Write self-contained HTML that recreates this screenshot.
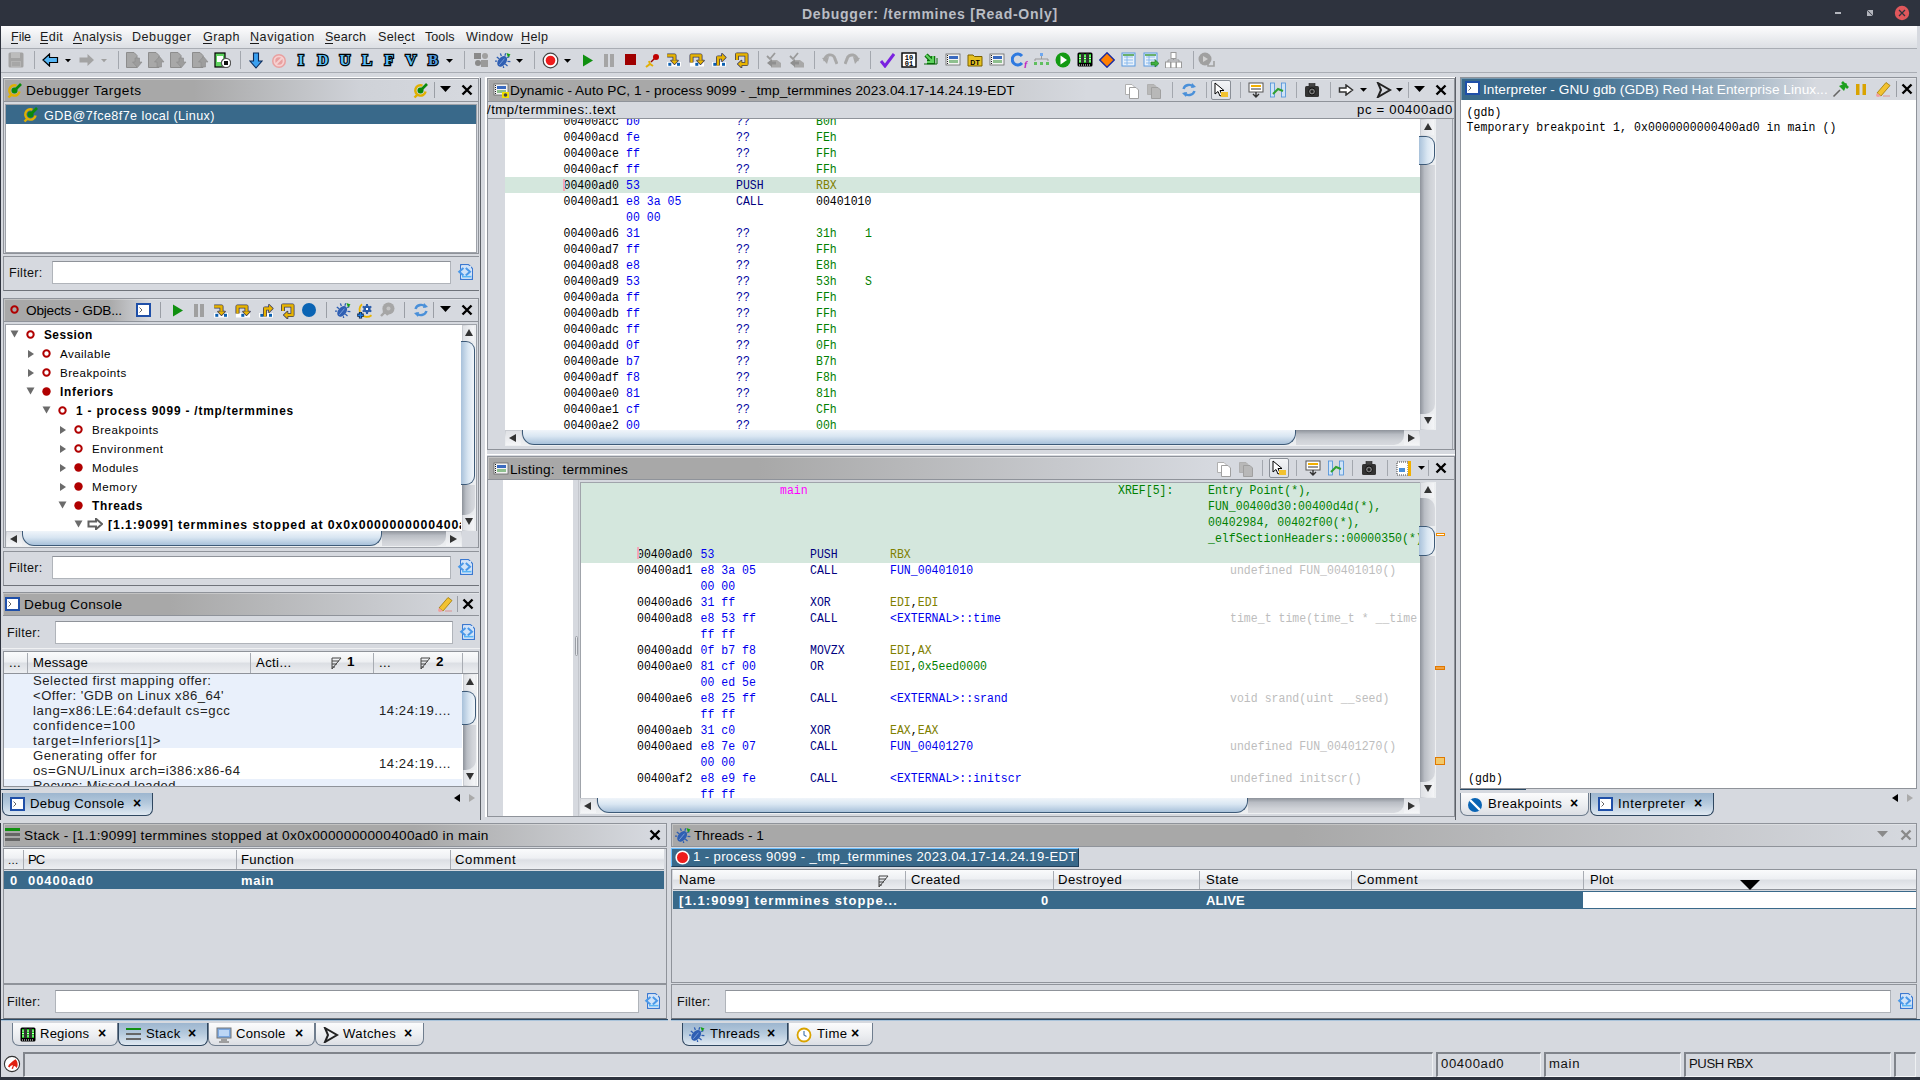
<!DOCTYPE html>
<html><head><meta charset="utf-8"><title>Debugger</title>
<style>
html,body{margin:0;padding:0;}
body{width:1920px;height:1080px;overflow:hidden;position:relative;background:#d6d9df;font-family:"Liberation Sans",sans-serif;}
body>div,body>svg{position:absolute;}
.t{position:absolute;white-space:pre;}
svg{position:absolute;}
</style></head><body>
<div style="left:0px;top:0px;width:1920px;height:26px;background:#2e333e;"></div>
<div class="t" style="left:802.00px;top:4.13px;font-size:14.04px;line-height:20px;letter-spacing:0.736px;color:#babdc4;font-weight:bold;">Debugger: /termmines [Read-Only]</div>
<div style="left:1835px;top:12px;width:6px;height:2px;background:#b3b6bd;"></div>
<svg style="left:1866px;top:9px;" width="8" height="8" viewBox="0 0 8 8"><path d="M1.5 1 H7 V6.5 Z M1 1.5 V7 H6.5 Z" fill="#b3b6bd"/></svg>
<svg style="left:1894px;top:5px;" width="16" height="16" viewBox="0 0 16 16"><circle cx="8" cy="8" r="7.2" fill="#e0575b"/><path d="M5 5 L11 11 M11 5 L5 11" stroke="#2e333e" stroke-width="1.3"/></svg>
<div style="left:0px;top:26px;width:1px;height:1054px;background:#2e333e;"></div>
<div style="left:0px;top:1077px;width:1920px;height:3px;background:#2e333e;"></div>
<div style="left:1px;top:26px;width:1919px;height:22px;background:linear-gradient(#fdfdfe,#e9ebee 60%,#dcdfe4);"></div>
<div style="left:1px;top:48px;width:1919px;height:1px;background:#a9adb4;"></div>
<div class="t" style="left:11.00px;top:26.63px;font-size:12.6px;line-height:20px;letter-spacing:-0.056px;color:#1a1a1a;">File</div>
<div class="t" style="left:40.00px;top:26.63px;font-size:12.6px;line-height:20px;letter-spacing:0.382px;color:#1a1a1a;">Edit</div>
<div class="t" style="left:73.00px;top:26.63px;font-size:12.6px;line-height:20px;letter-spacing:0.315px;color:#1a1a1a;">Analysis</div>
<div class="t" style="left:132.00px;top:26.63px;font-size:12.6px;line-height:20px;letter-spacing:0.508px;color:#1a1a1a;">Debugger</div>
<div class="t" style="left:203.00px;top:26.63px;font-size:12.6px;line-height:20px;letter-spacing:0.358px;color:#1a1a1a;">Graph</div>
<div class="t" style="left:250.00px;top:26.63px;font-size:12.6px;line-height:20px;letter-spacing:0.519px;color:#1a1a1a;">Navigation</div>
<div class="t" style="left:325.00px;top:26.63px;font-size:12.6px;line-height:20px;letter-spacing:0.218px;color:#1a1a1a;">Search</div>
<div class="t" style="left:378.00px;top:26.63px;font-size:12.6px;line-height:20px;letter-spacing:0.334px;color:#1a1a1a;">Select</div>
<div class="t" style="left:425.00px;top:26.63px;font-size:12.6px;line-height:20px;letter-spacing:0.030px;color:#1a1a1a;">Tools</div>
<div class="t" style="left:466.00px;top:26.63px;font-size:12.6px;line-height:20px;letter-spacing:0.417px;color:#1a1a1a;">Window</div>
<div class="t" style="left:521.00px;top:26.63px;font-size:12.6px;line-height:20px;letter-spacing:0.362px;color:#1a1a1a;">Help</div>
<div style="left:11px;top:43px;width:7px;height:1px;background:#1a1a1a;"></div>
<div style="left:40px;top:43px;width:8px;height:1px;background:#1a1a1a;"></div>
<div style="left:73px;top:43px;width:9px;height:1px;background:#1a1a1a;"></div>
<div style="left:203px;top:43px;width:9px;height:1px;background:#1a1a1a;"></div>
<div style="left:250px;top:43px;width:9px;height:1px;background:#1a1a1a;"></div>
<div style="left:325px;top:43px;width:8px;height:1px;background:#1a1a1a;"></div>
<div style="left:403px;top:43px;width:3px;height:1px;background:#1a1a1a;"></div>
<div style="left:521px;top:43px;width:9px;height:1px;background:#1a1a1a;"></div>
<div style="left:1px;top:49px;width:1919px;height:23px;background:#d6d9df;"></div>
<div style="left:1px;top:72px;width:1919px;height:1px;background:#a9adb4;"></div>
<div style="left:1px;top:73px;width:1919px;height:4px;background:#d6d9df;"></div>
<svg style="left:8px;top:52px;" width="16" height="16" viewBox="0 0 16 16"><rect x="0.5" y="0.5" width="15" height="15" rx="1.5" fill="#a3a3a3"/><rect x="3" y="1" width="9" height="5" fill="#bcbcbc"/><rect x="3" y="9" width="10" height="6" fill="#b4b4b4"/><path d="M4 11 H12 M4 13 H12" stroke="#999"/></svg>
<div style="left:34px;top:51px;width:1px;height:18px;background:#a3a7ae;"></div>
<svg style="left:42px;top:53px;" width="17" height="14" viewBox="0 0 17 14"><path d="M1 7 L7.5 1 V4.5 H15.5 V9.5 H7.5 V13 Z" fill="#56b6f5" stroke="#000" stroke-width="1.2"/></svg>
<svg style="left:65px;top:59px;" width="6" height="4" viewBox="0 0 6 4"><path d="M0 0 H6 L3.0 3.3000000000000003 Z" fill="#000"/></svg>
<svg style="left:78px;top:53px;" width="17" height="14" viewBox="0 0 17 14"><path d="M16 7 L9.5 1 V4.5 H1.5 V9.5 H9.5 V13 Z" fill="#a3a3a3"/></svg>
<svg style="left:101px;top:59px;" width="6" height="4" viewBox="0 0 6 4"><path d="M0 0 H6 L3.0 3.3000000000000003 Z" fill="#a0a0a0"/></svg>
<div style="left:118px;top:51px;width:1px;height:18px;background:#a3a7ae;"></div>
<svg style="left:126px;top:52px;" width="17" height="16" viewBox="0 0 17 16"><path d="M0.5 0.5 H8 L11 3.5 V15.5 H0.5 Z" fill="#a8a8a8" stroke="#8d8d8d"/><path d="M9 6 V10 H6.5 L11.5 15.5 L16 10 H13.5 V6 Z" fill="#9d9d9d" stroke="#8a8a8a" stroke-width="0.6"/></svg>
<svg style="left:148px;top:52px;" width="17" height="16" viewBox="0 0 17 16"><path d="M0.5 0.5 H8 L11 3.5 V15.5 H0.5 Z" fill="#a8a8a8" stroke="#8d8d8d"/><path d="M9 15 V10 H6.5 L11.5 4.5 L16 10 H13.5 V15 Z" fill="#9d9d9d" stroke="#8a8a8a" stroke-width="0.6"/></svg>
<svg style="left:170px;top:52px;" width="17" height="16" viewBox="0 0 17 16"><path d="M0.5 0.5 H8 L11 3.5 V15.5 H0.5 Z" fill="#a8a8a8" stroke="#8d8d8d"/><path d="M9 6 V10 H6.5 L11.5 15.5 L16 10 H13.5 V6 Z" fill="#9d9d9d" stroke="#8a8a8a" stroke-width="0.6"/></svg>
<svg style="left:192px;top:52px;" width="17" height="16" viewBox="0 0 17 16"><path d="M0.5 0.5 H8 L11 3.5 V15.5 H0.5 Z" fill="#a8a8a8" stroke="#8d8d8d"/><path d="M9 15 V10 H6.5 L11.5 4.5 L16 10 H13.5 V15 Z" fill="#9d9d9d" stroke="#8a8a8a" stroke-width="0.6"/></svg>
<svg style="left:214px;top:52px;" width="17" height="16" viewBox="0 0 17 16"><rect x="1" y="1" width="10" height="14" fill="#5fd35f" stroke="#000" stroke-width="1.2"/><rect x="3" y="4" width="6" height="6" fill="#fff"/><circle cx="12" cy="11" r="4.6" fill="#fff" stroke="#555" stroke-width="1.2"/><rect x="10" y="9" width="4" height="4" fill="#111"/></svg>
<div style="left:240px;top:51px;width:1px;height:18px;background:#a3a7ae;"></div>
<svg style="left:249px;top:52px;" width="14" height="17" viewBox="0 0 14 17"><path d="M4.5 1 H9.5 V9 H13 L7 16 L1 9 H4.5 Z" fill="#3aa0f0" stroke="#0a2a5a" stroke-width="1.1"/></svg>
<svg style="left:271px;top:53px;" width="16" height="16" viewBox="0 0 16 16"><circle cx="8" cy="8" r="7" fill="#e8a0a0"/><circle cx="8" cy="8" r="4.6" fill="none" stroke="#f6d0d0" stroke-width="1.8"/><path d="M4.5 11.5 L11.5 4.5" stroke="#f6d0d0" stroke-width="1.8"/></svg>
<svg style="left:293px;top:52px;" width="16" height="17" viewBox="0 0 16 17"><text x="8" y="12.8" text-anchor="middle" font-family="Liberation Serif" font-weight="bold" font-size="15" fill="#5ac0f8" stroke="#000" stroke-width="2.4" stroke-linejoin="miter" paint-order="stroke">I</text></svg>
<svg style="left:315px;top:52px;" width="16" height="17" viewBox="0 0 16 17"><text x="8" y="12.8" text-anchor="middle" font-family="Liberation Serif" font-weight="bold" font-size="15" fill="#5ac0f8" stroke="#000" stroke-width="2.4" stroke-linejoin="miter" paint-order="stroke">D</text></svg>
<svg style="left:337px;top:52px;" width="16" height="17" viewBox="0 0 16 17"><text x="8" y="12.8" text-anchor="middle" font-family="Liberation Serif" font-weight="bold" font-size="15" fill="#5ac0f8" stroke="#000" stroke-width="2.4" stroke-linejoin="miter" paint-order="stroke">U</text></svg>
<svg style="left:359px;top:52px;" width="16" height="17" viewBox="0 0 16 17"><text x="8" y="12.8" text-anchor="middle" font-family="Liberation Serif" font-weight="bold" font-size="15" fill="#5ac0f8" stroke="#000" stroke-width="2.4" stroke-linejoin="miter" paint-order="stroke">L</text></svg>
<svg style="left:381px;top:52px;" width="16" height="17" viewBox="0 0 16 17"><text x="8" y="12.8" text-anchor="middle" font-family="Liberation Serif" font-weight="bold" font-size="15" fill="#5ac0f8" stroke="#000" stroke-width="2.4" stroke-linejoin="miter" paint-order="stroke">F</text></svg>
<svg style="left:403px;top:52px;" width="16" height="17" viewBox="0 0 16 17"><text x="8" y="12.8" text-anchor="middle" font-family="Liberation Serif" font-weight="bold" font-size="15" fill="#5ac0f8" stroke="#000" stroke-width="2.4" stroke-linejoin="miter" paint-order="stroke">V</text></svg>
<svg style="left:425px;top:52px;" width="16" height="17" viewBox="0 0 16 17"><text x="8" y="12.8" text-anchor="middle" font-family="Liberation Serif" font-weight="bold" font-size="15" fill="#4f9be0" stroke="#000" stroke-width="2.4" stroke-linejoin="miter" paint-order="stroke">B</text></svg>
<svg style="left:446px;top:59px;" width="7" height="4" viewBox="0 0 7 4"><path d="M0 0 H7 L3.5 3.8500000000000005 Z" fill="#000"/></svg>
<div style="left:464px;top:51px;width:1px;height:18px;background:#a3a7ae;"></div>
<svg style="left:473px;top:52px;" width="16" height="16" viewBox="0 0 16 16"><rect x="1" y="1" width="7" height="6" fill="#8a8a8a"/><rect x="8" y="8" width="7" height="7" fill="#9a9a9a"/><circle cx="5" cy="11" r="3" fill="#8a8a8a"/><circle cx="12" cy="4" r="3" fill="#a0a0a0"/></svg>
<svg style="left:495px;top:52px;" width="16" height="16" viewBox="0 0 16 16"><g transform="rotate(40 7.5 9)"><ellipse cx="7.5" cy="9.5" rx="4" ry="6" fill="#2f5fb3"/><path d="M3.5 6 L1 4.5 M3.5 9.5 L0.5 9.5 M3.5 12.5 L1 14.5 M11.5 6 L14 4.5 M11.5 9.5 L14.5 9.5 M11.5 12.5 L14 14.5 M6 3.5 L5 1 M9 3.5 L10 1" stroke="#2f5fb3" stroke-width="1.3"/><path d="M7.5 6 V14" stroke="#8fb0e0" stroke-width="0.7"/></g><path d="M11.5 1 L15.5 2.5 L13 5.5 Z" fill="#14a014"/></svg>
<svg style="left:516px;top:59px;" width="7" height="4" viewBox="0 0 7 4"><path d="M0 0 H7 L3.5 3.8500000000000005 Z" fill="#000"/></svg>
<div style="left:534px;top:51px;width:1px;height:18px;background:#a3a7ae;"></div>
<svg style="left:542px;top:52px;" width="17" height="17" viewBox="0 0 17 17"><circle cx="8.5" cy="8.5" r="7.3" fill="#fff" stroke="#444" stroke-width="1.2"/><circle cx="8.5" cy="8.5" r="4.8" fill="#ee1c1c"/></svg>
<svg style="left:564px;top:59px;" width="7" height="4" viewBox="0 0 7 4"><path d="M0 0 H7 L3.5 3.8500000000000005 Z" fill="#000"/></svg>
<svg style="left:582px;top:54px;" width="12" height="13" viewBox="0 0 12 13"><path d="M1 0.5 L11 6.5 L1 12.5 Z" fill="#109010"/></svg>
<svg style="left:603px;top:54px;" width="12" height="13" viewBox="0 0 12 13"><rect x="1" y="0" width="4" height="13" fill="#a5a5a5"/><rect x="7" y="0" width="4" height="13" fill="#a5a5a5"/></svg>
<div style="left:625px;top:54px;width:11px;height:11px;background:#a00000;"></div>
<svg style="left:644px;top:52px;" width="16" height="17" viewBox="0 0 16 17"><path d="M2 15 L6 12 L9 14 M6 12 L5 9" stroke="#e2b007" stroke-width="2" fill="none"/><path d="M7 10 L13 4" stroke="#a00000" stroke-width="1.4"/><circle cx="12" cy="5" r="3" fill="#c00000"/></svg>
<svg style="left:666px;top:52px;" width="16" height="16" viewBox="0 0 16 16"><rect x="1" y="10" width="14" height="4.5" fill="#fff"/><rect x="2.3" y="10.8" width="3" height="3" fill="#0b5fb0"/><rect x="11" y="10.8" width="3" height="3" fill="#0b5fb0"/><path d="M1.2 3.5 H8.5 V8.5" stroke="#3c3c58" stroke-width="4" fill="none" stroke-linejoin="round"/><path d="M5 8.5 H12 L8.5 12.2 Z" fill="#3c3c58" stroke="#3c3c58" stroke-width="1.6" stroke-linejoin="round"/><path d="M1.2 3.5 H8.5 V8.5" stroke="#e8b400" stroke-width="2.4" fill="none"/><path d="M5 8.5 H12 L8.5 12.2 Z" fill="#e8b400"/></svg>
<svg style="left:689px;top:52px;" width="16" height="16" viewBox="0 0 16 16"><rect x="1" y="10" width="14" height="4.5" fill="#fff"/><rect x="6.3" y="10.8" width="3" height="3" fill="#0b5fb0"/><path d="M2.5 10.5 V3.5 H11.5 V8.5" stroke="#3c3c58" stroke-width="4" fill="none" stroke-linejoin="round"/><path d="M8 8.5 H15 L11.5 12.2 Z" fill="#3c3c58" stroke="#3c3c58" stroke-width="1.6" stroke-linejoin="round"/><path d="M2.5 10.5 V3.5 H11.5 V8.5" stroke="#e8b400" stroke-width="2.4" fill="none"/><path d="M8 8.5 H15 L11.5 12.2 Z" fill="#e8b400"/></svg>
<svg style="left:711px;top:52px;" width="16" height="16" viewBox="0 0 16 16"><rect x="1" y="10" width="14" height="4.5" fill="#fff"/><rect x="2.3" y="10.8" width="3" height="3" fill="#0b5fb0"/><rect x="11" y="10.8" width="3" height="3" fill="#0b5fb0"/><path d="M7 13.5 V5.5 H11.5" stroke="#3c3c58" stroke-width="4" fill="none" stroke-linejoin="round"/><path d="M11 1.8 L14.8 5.5 L11 9.2 Z" fill="#3c3c58" stroke="#3c3c58" stroke-width="1.6" stroke-linejoin="round"/><path d="M7 13.5 V5.5 H11.5" stroke="#e8b400" stroke-width="2.4" fill="none"/><path d="M11 1.8 L14.8 5.5 L11 9.2 Z" fill="#e8b400"/></svg>
<svg style="left:734px;top:52px;" width="16" height="16" viewBox="0 0 16 16"><path d="M3 8 V2.5 H12.5 V12 H7" stroke="#3c3c58" stroke-width="4" fill="none" stroke-linejoin="round"/><path d="M7.5 8.5 L3.8 12 L7.5 15.5 Z" fill="#3c3c58" stroke="#3c3c58" stroke-width="1.6" stroke-linejoin="round"/><path d="M3 8 V2.5 H12.5 V12 H7" stroke="#e8b400" stroke-width="2.4" fill="none"/><path d="M7.5 8.5 L3.8 12 L7.5 15.5 Z" fill="#e8b400"/></svg>
<div style="left:758px;top:51px;width:1px;height:18px;background:#a3a7ae;"></div>
<svg style="left:766px;top:52px;" width="16" height="16" viewBox="0 0 16 16"><path d="M1 4 L4 7 L9 1" stroke="#9a9a9a" stroke-width="1.8" fill="none"/><path d="M5 8 H11 L15 11 V15.5 H5 Z" fill="#a8a8a8"/><path d="M1 11 L6 7 V9.5 H10 V12.5 H6 V15 Z" fill="#8f8f8f"/></svg>
<svg style="left:789px;top:52px;" width="16" height="16" viewBox="0 0 16 16"><path d="M1 4 L4 7 L9 1" stroke="#9a9a9a" stroke-width="1.8" fill="none"/><path d="M5 8 H11 L15 11 V15.5 H5 Z" fill="#a8a8a8"/><path d="M1 11 L6 7 V9.5 H10 V12.5 H6 V15 Z" fill="#8f8f8f"/></svg>
<div style="left:814px;top:51px;width:1px;height:18px;background:#a3a7ae;"></div>
<svg style="left:822px;top:53px;" width="16" height="14" viewBox="0 0 16 14"><path d="M3 8 A5 5 0 0 1 13 6 L15 11" stroke="#a8a8a8" stroke-width="3" fill="none"/><path d="M0 5 L5 11 L7 4 Z" fill="#a8a8a8"/></svg>
<svg style="left:844px;top:53px;" width="16" height="14" viewBox="0 0 16 14"><path d="M13 8 A5 5 0 0 0 3 6 L1 11" stroke="#a8a8a8" stroke-width="3" fill="none"/><path d="M16 5 L11 11 L9 4 Z" fill="#a8a8a8"/></svg>
<div style="left:870px;top:51px;width:1px;height:18px;background:#a3a7ae;"></div>
<svg style="left:879px;top:52px;" width="16" height="16" viewBox="0 0 16 16"><path d="M2 9 L6 14 L15 2" stroke="#7a22e0" stroke-width="3" fill="none"/></svg>
<svg style="left:901px;top:52px;" width="16" height="16" viewBox="0 0 16 16"><rect x="1" y="1" width="14" height="14" fill="#fff" stroke="#000" stroke-width="1.4"/><text x="8" y="7.5" text-anchor="middle" font-family="Liberation Mono" font-weight="bold" font-size="7" fill="#000">10</text><text x="8" y="14" text-anchor="middle" font-family="Liberation Mono" font-weight="bold" font-size="7" fill="#000">01</text></svg>
<svg style="left:923px;top:52px;" width="16" height="16" viewBox="0 0 16 16"><path d="M3 3 L10 10 M10 4 V10 H4" stroke="#0a6a0a" stroke-width="4.5" fill="none"/><path d="M3 3 L10 10 M10 4 V10 H4" stroke="#5fd35f" stroke-width="2.2" fill="none"/><path d="M1 12 H14 V6" stroke="#0a6a0a" stroke-width="1" fill="none"/></svg>
<svg style="left:945px;top:52px;" width="16" height="16" viewBox="0 0 16 16"><rect x="1" y="2" width="14" height="11" fill="#f3f3f3" stroke="#666" stroke-width="0.8"/><rect x="4" y="4" width="9" height="3" fill="#3a6ac0"/><rect x="4" y="8" width="9" height="3" fill="#8fc08f"/><path d="M2.5 3 V12" stroke="#222" stroke-dasharray="1 1"/></svg>
<svg style="left:967px;top:52px;" width="17" height="16" viewBox="0 0 17 16"><path d="M1 3 H6 L7.5 4.5 H15 V14 H1 Z" fill="#e6c020" stroke="#7a6000"/><text x="8" y="13" text-anchor="middle" font-family="Liberation Sans" font-weight="bold" font-size="7" fill="#000">DT</text></svg>
<svg style="left:989px;top:52px;" width="16" height="16" viewBox="0 0 16 16"><rect x="1" y="2" width="14" height="11" fill="#f3f3f3" stroke="#666" stroke-width="0.8"/><rect x="4" y="4" width="9" height="3" fill="#3a6ac0"/><rect x="4" y="8" width="9" height="3" fill="#8fc08f"/><path d="M2.5 3 V12" stroke="#222" stroke-dasharray="1 1"/></svg>
<svg style="left:1011px;top:52px;" width="17" height="16" viewBox="0 0 17 16"><path d="M11 4 A5.5 5.5 0 1 0 11 11" stroke="#2f7ae0" stroke-width="3" fill="none"/><text x="13" y="15.5" font-family="Liberation Serif" font-style="italic" font-weight="bold" font-size="10" fill="#c020c0">f</text></svg>
<svg style="left:1033px;top:52px;" width="17" height="16" viewBox="0 0 17 16"><rect x="7" y="1" width="3" height="3" fill="#6fa8ef"/><path d="M8.5 4 V7 M2 9 V7 H15 V9" stroke="#999" fill="none"/><rect x="1" y="10" width="3" height="3" fill="#5fbf5f"/><rect x="7" y="10" width="3" height="3" fill="#5fbf5f"/><rect x="13" y="10" width="3" height="3" fill="#5fbf5f"/></svg>
<svg style="left:1055px;top:52px;" width="16" height="16" viewBox="0 0 16 16"><circle cx="8" cy="8" r="7.5" fill="#129a12"/><path d="M5.5 3.5 L12 8 L5.5 12.5 Z" fill="#fff"/></svg>
<svg style="left:1077px;top:52px;" width="16" height="16" viewBox="0 0 16 16"><rect x="0.5" y="0.5" width="15" height="14" rx="1.5" fill="#000"/><rect x="2" y="2" width="12" height="9" fill="#18d018"/><path d="M2 4 H14 M2 6.5 H14 M2 9 H14" stroke="#fff" stroke-width="0.8"/><rect x="4" y="1.5" width="3" height="9.5" fill="#333"/><rect x="9" y="1.5" width="3" height="9.5" fill="#333"/><path d="M2 13 H14" stroke="#fff" stroke-dasharray="1 1"/></svg>
<svg style="left:1099px;top:52px;" width="16" height="16" viewBox="0 0 16 16"><path d="M8 0.8 L15.2 8 L8 15.2 L0.8 8 Z" fill="#ff7f00" stroke="#1a2aa0" stroke-width="1.4"/></svg>
<svg style="left:1121px;top:52px;" width="16" height="16" viewBox="0 0 16 16"><rect x="1" y="1" width="13" height="13" fill="#e8f1fb" stroke="#5a9ae0"/><path d="M3 5 H12 M3 8 H12 M3 11 H12 M6 3 V13" stroke="#7ab0ea" stroke-width="0.8"/><rect x="2" y="2" width="11" height="2" fill="#6ab06a"/></svg>
<svg style="left:1143px;top:52px;" width="16" height="16" viewBox="0 0 16 16"><rect x="1" y="1" width="13" height="13" fill="#e8f1fb" stroke="#5a9ae0"/><path d="M3 5 H12 M3 8 H12 M3 11 H12 M6 3 V13" stroke="#7ab0ea" stroke-width="0.8"/><rect x="2" y="2" width="11" height="2" fill="#6ab06a"/><path d="M8 10 H12 V7.5 L16 11.5 L12 15 V13 H8Z" fill="#3fb03f" stroke="#1a701a" stroke-width="0.6"/></svg>
<svg style="left:1165px;top:52px;" width="17" height="16" viewBox="0 0 17 16"><rect x="6" y="0.5" width="5" height="6" fill="#fff" stroke="#999"/><path d="M8.5 6.5 V8 M3 10 V8 H14 V10" stroke="#999" fill="none"/><rect x="0.5" y="10" width="5" height="6" fill="#fff" stroke="#999"/><rect x="6" y="10" width="5" height="6" fill="#fff" stroke="#999"/><rect x="11.5" y="10" width="5" height="6" fill="#fff" stroke="#999"/></svg>
<div style="left:1193px;top:51px;width:1px;height:18px;background:#a3a7ae;"></div>
<svg style="left:1198px;top:52px;" width="17" height="17" viewBox="0 0 17 17"><circle cx="7" cy="7" r="6.5" fill="#a0a0a0"/><path d="M5 4 L10 7 L5 10Z" fill="#d0d0d0"/><path d="M10 11 V14 H16 V9" stroke="#a0a0a0" stroke-width="1.6" fill="none"/></svg>
<div style="left:3px;top:77px;width:476px;height:1px;background:#fff;"></div>
<div style="left:485px;top:77px;width:970px;height:1px;background:#fff;"></div>
<div style="left:3px;top:78px;width:476px;height:176px;box-sizing:border-box;border:1px solid #8f939a;"></div>
<div style="left:4px;top:79px;width:474px;height:22px;background:linear-gradient(to right,#a9a9a9 0%,#a9a9a9 100%,#d6d9df 100%,#d6d9df 100%);"></div>
<div style="left:4px;top:79px;width:474px;height:22px;background:linear-gradient(to right,#a8a8a8 0%,#a8a8a8 40%,#cfd2d8 75%,#d6d9df 100%);box-shadow:inset 1px 1px 0 rgba(255,255,255,.3);"></div>
<svg style="left:6.5px;top:82px;" width="16" height="17" viewBox="0 0 16 17"><path d="M9.5 3.6 A5.2 5.2 0 1 0 12.6 9.5" stroke="#e0b000" stroke-width="2.4" fill="none"/><path d="M1.5 15.5 L4.2 12.8" stroke="#e0b000" stroke-width="2.4"/><circle cx="7.5" cy="8.5" r="3" fill="#0a8a0a"/><path d="M8 8 L14 2" stroke="#0a8a0a" stroke-width="2.6"/></svg>
<div class="t" style="left:26.00px;top:81.27px;font-size:13.65px;line-height:20px;letter-spacing:0.451px;color:#000;">Debugger Targets</div>
<svg style="left:412.5px;top:82px;" width="16" height="17" viewBox="0 0 16 17"><path d="M9.5 3.6 A5.2 5.2 0 1 0 12.6 9.5" stroke="#e0b000" stroke-width="2.4" fill="none"/><path d="M1.5 15.5 L4.2 12.8" stroke="#e0b000" stroke-width="2.4"/><circle cx="7.5" cy="8.5" r="3" fill="#0a8a0a"/><path d="M8 8 L14 2" stroke="#0a8a0a" stroke-width="2.6"/></svg>
<div style="left:434px;top:82px;width:1px;height:16px;background:#9a9ea5;"></div>
<svg style="left:440px;top:86px;" width="11" height="7" viewBox="0 0 11 7"><path d="M0 0 H11 L5.5 6.050000000000001 Z" fill="#000"/></svg>
<svg style="left:461px;top:84px;" width="12" height="12" viewBox="0 0 12 12"><path d="M1.5 1.5 L10.5 10.5 M10.5 1.5 L1.5 10.5" stroke="#000" stroke-width="2.4"/></svg>
<div style="left:4px;top:101px;width:474px;height:1px;background:#8f939a;"></div>
<div style="left:5px;top:104px;width:472px;height:149px;box-sizing:border-box;background:#fff;border:1px solid #9ea2a9;"></div>
<div style="left:6px;top:105px;width:470px;height:19px;background:#39698a;"></div>
<svg style="left:22.5px;top:106px;" width="16" height="17" viewBox="0 0 16 17"><path d="M9.5 3.6 A5.2 5.2 0 1 0 12.6 9.5" stroke="#e0b000" stroke-width="2.4" fill="none"/><path d="M1.5 15.5 L4.2 12.8" stroke="#e0b000" stroke-width="2.4"/><circle cx="7.5" cy="8.5" r="3" fill="#0a8a0a"/><path d="M8 8 L14 2" stroke="#0a8a0a" stroke-width="2.6"/></svg>
<div class="t" style="left:44.00px;top:105.63px;font-size:12.6px;line-height:20px;letter-spacing:0.429px;color:#fff;">GDB@7fce8f7e local (Linux)</div>
<div style="left:3px;top:256px;width:476px;height:35px;box-sizing:border-box;border:1px solid #8f939a;border-right:none;border-bottom-color:#6f737a;"></div>
<div style="left:52px;top:261px;width:399px;height:23px;box-sizing:border-box;background:#fff;border:1px solid #b0b4ba;border-top-color:#8f939a;"></div>
<div class="t" style="left:9.00px;top:262.63px;font-size:12.6px;line-height:20px;letter-spacing:0.293px;color:#111;">Filter:</div>
<svg style="left:457px;top:264px;" width="17" height="17" viewBox="0 0 17 17"><path d="M3.6 0.6 H11.5 L15.4 4.5 V15.4 H3.6 Z" fill="#fff" stroke="#3a78d0" stroke-width="1.2" stroke-linejoin="round"/><rect x="5" y="2" width="9" height="9" fill="#cfe2f8"/><path d="M6.5 4 L2.2 7.8 L6.5 11.6 M8.8 4 L13 7.8 L8.8 11.6" stroke="#4a98e8" stroke-width="2" fill="none"/><rect x="5" y="11.6" width="9.5" height="2" fill="#5ab4f5"/></svg>
<div style="left:3px;top:298px;width:476px;height:250px;box-sizing:border-box;border:1px solid #8f939a;"></div>
<div style="left:4px;top:299px;width:474px;height:22px;background:linear-gradient(to right,#a8a8a8 0%,#a8a8a8 22%,#d6d9df 31%,#d6d9df 100%);box-shadow:inset 1px 1px 0 rgba(255,255,255,.3);"></div>
<svg style="left:10px;top:305px;" width="9" height="9" viewBox="0 0 9 9"><circle cx="4.5" cy="4.5" r="3.2" fill="none" stroke="#b00000" stroke-width="2"/></svg>
<div class="t" style="left:26.00px;top:301.27px;font-size:13.65px;line-height:20px;letter-spacing:-0.210px;color:#000;">Objects - GDB...</div>
<svg style="left:136px;top:303px;" width="15" height="14" viewBox="0 0 15 14"><rect x="1" y="1" width="13" height="12" fill="#fff" stroke="#1f4fa8" stroke-width="2"/><path d="M3.5 4.5 L6 7 L3.5 9.5" stroke="#555" stroke-width="0.9" fill="none"/></svg>
<div style="left:160px;top:302px;width:1px;height:16px;background:#9a9ea5;"></div>
<svg style="left:172px;top:304px;" width="12" height="13" viewBox="0 0 12 13"><path d="M1 0.5 L11 6.5 L1 12.5 Z" fill="#109010"/></svg>
<svg style="left:193px;top:304px;" width="12" height="13" viewBox="0 0 12 13"><rect x="1" y="0" width="4" height="13" fill="#a0a0a0"/><rect x="7" y="0" width="4" height="13" fill="#a0a0a0"/></svg>
<svg style="left:213px;top:303px;" width="16" height="16" viewBox="0 0 16 16"><rect x="1" y="10" width="14" height="4.5" fill="#fff"/><rect x="2.3" y="10.8" width="3" height="3" fill="#0b5fb0"/><rect x="11" y="10.8" width="3" height="3" fill="#0b5fb0"/><path d="M1.2 3.5 H8.5 V8.5" stroke="#3c3c58" stroke-width="4" fill="none" stroke-linejoin="round"/><path d="M5 8.5 H12 L8.5 12.2 Z" fill="#3c3c58" stroke="#3c3c58" stroke-width="1.6" stroke-linejoin="round"/><path d="M1.2 3.5 H8.5 V8.5" stroke="#e8b400" stroke-width="2.4" fill="none"/><path d="M5 8.5 H12 L8.5 12.2 Z" fill="#e8b400"/></svg>
<svg style="left:235px;top:303px;" width="16" height="16" viewBox="0 0 16 16"><rect x="1" y="10" width="14" height="4.5" fill="#fff"/><rect x="6.3" y="10.8" width="3" height="3" fill="#0b5fb0"/><path d="M2.5 10.5 V3.5 H11.5 V8.5" stroke="#3c3c58" stroke-width="4" fill="none" stroke-linejoin="round"/><path d="M8 8.5 H15 L11.5 12.2 Z" fill="#3c3c58" stroke="#3c3c58" stroke-width="1.6" stroke-linejoin="round"/><path d="M2.5 10.5 V3.5 H11.5 V8.5" stroke="#e8b400" stroke-width="2.4" fill="none"/><path d="M8 8.5 H15 L11.5 12.2 Z" fill="#e8b400"/></svg>
<svg style="left:258px;top:303px;" width="16" height="16" viewBox="0 0 16 16"><rect x="1" y="10" width="14" height="4.5" fill="#fff"/><rect x="2.3" y="10.8" width="3" height="3" fill="#0b5fb0"/><rect x="11" y="10.8" width="3" height="3" fill="#0b5fb0"/><path d="M7 13.5 V5.5 H11.5" stroke="#3c3c58" stroke-width="4" fill="none" stroke-linejoin="round"/><path d="M11 1.8 L14.8 5.5 L11 9.2 Z" fill="#3c3c58" stroke="#3c3c58" stroke-width="1.6" stroke-linejoin="round"/><path d="M7 13.5 V5.5 H11.5" stroke="#e8b400" stroke-width="2.4" fill="none"/><path d="M11 1.8 L14.8 5.5 L11 9.2 Z" fill="#e8b400"/></svg>
<svg style="left:280px;top:303px;" width="16" height="16" viewBox="0 0 16 16"><path d="M3 8 V2.5 H12.5 V12 H7" stroke="#3c3c58" stroke-width="4" fill="none" stroke-linejoin="round"/><path d="M7.5 8.5 L3.8 12 L7.5 15.5 Z" fill="#3c3c58" stroke="#3c3c58" stroke-width="1.6" stroke-linejoin="round"/><path d="M3 8 V2.5 H12.5 V12 H7" stroke="#e8b400" stroke-width="2.4" fill="none"/><path d="M7.5 8.5 L3.8 12 L7.5 15.5 Z" fill="#e8b400"/></svg>
<svg style="left:301px;top:302px;" width="16" height="16" viewBox="0 0 16 16"><circle cx="8" cy="8" r="7" fill="#0a64b4"/></svg>
<div style="left:326px;top:302px;width:1px;height:16px;background:#9a9ea5;"></div>
<svg style="left:335px;top:302px;" width="16" height="16" viewBox="0 0 16 16"><g transform="rotate(40 7.5 9)"><ellipse cx="7.5" cy="9.5" rx="4" ry="6" fill="#2f5fb3"/><path d="M3.5 6 L1 4.5 M3.5 9.5 L0.5 9.5 M3.5 12.5 L1 14.5 M11.5 6 L14 4.5 M11.5 9.5 L14.5 9.5 M11.5 12.5 L14 14.5 M6 3.5 L5 1 M9 3.5 L10 1" stroke="#2f5fb3" stroke-width="1.3"/><path d="M7.5 6 V14" stroke="#8fb0e0" stroke-width="0.7"/></g><path d="M11.5 1 L15.5 2.5 L13 5.5 Z" fill="#14a014"/></svg>
<svg style="left:356px;top:302px;" width="17" height="17" viewBox="0 0 17 17"><path d="M6 2.2 A7 7 0 0 0 15.5 13.2" stroke="#e8b400" stroke-width="1.8" fill="none"/><rect x="10" y="2" width="2" height="2.4" fill="#2a5caa" transform="rotate(0 11 7)"/><rect x="10" y="2" width="2" height="2.4" fill="#2a5caa" transform="rotate(60 11 7)"/><rect x="10" y="2" width="2" height="2.4" fill="#2a5caa" transform="rotate(120 11 7)"/><rect x="10" y="2" width="2" height="2.4" fill="#2a5caa" transform="rotate(180 11 7)"/><rect x="10" y="2" width="2" height="2.4" fill="#2a5caa" transform="rotate(240 11 7)"/><rect x="10" y="2" width="2" height="2.4" fill="#2a5caa" transform="rotate(300 11 7)"/><circle cx="11" cy="7" r="3.6" fill="#2a5caa"/><rect x="10" y="6" width="2" height="2" fill="#fff"/><path d="M4.5 10 V16.5 M1.2 13.2 H7.8" stroke="#0a2040" stroke-width="3.2"/><path d="M4.5 10.5 V16 M1.7 13.2 H7.3" stroke="#1e7ae0" stroke-width="1.6"/></svg>
<svg style="left:379px;top:302px;" width="16" height="16" viewBox="0 0 16 16"><circle cx="9.5" cy="6.5" r="6" fill="#a6a6a6"/><circle cx="9.5" cy="6.5" r="2" fill="#c4c4c4"/><path d="M5 4 V12 M2 14 L6 10 L9 13" stroke="#a6a6a6" stroke-width="2.4" fill="none"/></svg>
<div style="left:404px;top:302px;width:1px;height:16px;background:#9a9ea5;"></div>
<svg style="left:413px;top:302px;" width="16" height="16" viewBox="0 0 16 16"><path d="M2.5 7 A6 5.5 0 0 1 13 5" stroke="#4a90d9" stroke-width="2.4" fill="none"/><path d="M13.5 9 A6 5.5 0 0 1 3 11" stroke="#4a90d9" stroke-width="2.4" fill="none"/><path d="M11 1 L15 5 L10 6Z M5 15 L1 11 L6 10Z" fill="#4a90d9"/></svg>
<div style="left:433px;top:302px;width:1px;height:16px;background:#9a9ea5;"></div>
<svg style="left:440px;top:306px;" width="11" height="7" viewBox="0 0 11 7"><path d="M0 0 H11 L5.5 6.050000000000001 Z" fill="#000"/></svg>
<svg style="left:461px;top:304px;" width="12" height="12" viewBox="0 0 12 12"><path d="M1.5 1.5 L10.5 10.5 M10.5 1.5 L1.5 10.5" stroke="#000" stroke-width="2.4"/></svg>
<div style="left:4px;top:321px;width:474px;height:1px;background:#8f939a;"></div>
<div style="left:5px;top:324px;width:472px;height:224px;box-sizing:border-box;background:#fff;border:1px solid #9ea2a9;"></div>
<svg style="left:10px;top:330px;" width="9" height="8" viewBox="0 0 9 8"><path d="M0.5 0.5 H8.5 L4.5 7.5 Z" fill="#6b6b6b"/></svg>
<svg style="left:26px;top:330px;" width="9" height="9" viewBox="0 0 9 9"><circle cx="4.5" cy="4.5" r="3.2" fill="none" stroke="#b00000" stroke-width="2"/></svg>
<div class="t" style="left:44.00px;top:324.88px;font-size:11.88px;line-height:20px;letter-spacing:0.433px;color:#000;font-weight:bold;">Session</div>
<svg style="left:27px;top:349px;" width="8" height="10" viewBox="0 0 8 10"><path d="M1 1 L7 5 L1 9 Z" fill="#6b6b6b"/></svg>
<svg style="left:42px;top:349px;" width="9" height="9" viewBox="0 0 9 9"><circle cx="4.5" cy="4.5" r="3.2" fill="none" stroke="#b00000" stroke-width="2"/></svg>
<div class="t" style="left:60.00px;top:344.00px;font-size:11.55px;line-height:20px;letter-spacing:0.459px;color:#000;">Available</div>
<svg style="left:27px;top:368px;" width="8" height="10" viewBox="0 0 8 10"><path d="M1 1 L7 5 L1 9 Z" fill="#6b6b6b"/></svg>
<svg style="left:42px;top:368px;" width="9" height="9" viewBox="0 0 9 9"><circle cx="4.5" cy="4.5" r="3.2" fill="none" stroke="#b00000" stroke-width="2"/></svg>
<div class="t" style="left:60.00px;top:363.00px;font-size:11.55px;line-height:20px;letter-spacing:0.528px;color:#000;">Breakpoints</div>
<svg style="left:26px;top:387px;" width="9" height="8" viewBox="0 0 9 8"><path d="M0.5 0.5 H8.5 L4.5 7.5 Z" fill="#6b6b6b"/></svg>
<svg style="left:42px;top:387px;" width="9" height="9" viewBox="0 0 9 9"><circle cx="4.5" cy="4.5" r="4.2" fill="#b00000"/></svg>
<div class="t" style="left:60.00px;top:381.88px;font-size:11.88px;line-height:20px;letter-spacing:0.713px;color:#000;font-weight:bold;">Inferiors</div>
<svg style="left:42px;top:406px;" width="9" height="8" viewBox="0 0 9 8"><path d="M0.5 0.5 H8.5 L4.5 7.5 Z" fill="#6b6b6b"/></svg>
<svg style="left:58px;top:406px;" width="9" height="9" viewBox="0 0 9 9"><circle cx="4.5" cy="4.5" r="3.2" fill="none" stroke="#b00000" stroke-width="2"/></svg>
<div class="t" style="left:76.00px;top:400.88px;font-size:11.88px;line-height:20px;letter-spacing:0.806px;color:#000;font-weight:bold;">1 - process 9099 - /tmp/termmines</div>
<svg style="left:59px;top:425px;" width="8" height="10" viewBox="0 0 8 10"><path d="M1 1 L7 5 L1 9 Z" fill="#6b6b6b"/></svg>
<svg style="left:74px;top:425px;" width="9" height="9" viewBox="0 0 9 9"><circle cx="4.5" cy="4.5" r="3.2" fill="none" stroke="#b00000" stroke-width="2"/></svg>
<div class="t" style="left:92.00px;top:420.00px;font-size:11.55px;line-height:20px;letter-spacing:0.528px;color:#000;">Breakpoints</div>
<svg style="left:59px;top:444px;" width="8" height="10" viewBox="0 0 8 10"><path d="M1 1 L7 5 L1 9 Z" fill="#6b6b6b"/></svg>
<svg style="left:74px;top:444px;" width="9" height="9" viewBox="0 0 9 9"><circle cx="4.5" cy="4.5" r="3.2" fill="none" stroke="#b00000" stroke-width="2"/></svg>
<div class="t" style="left:92.00px;top:439.00px;font-size:11.55px;line-height:20px;letter-spacing:0.619px;color:#000;">Environment</div>
<svg style="left:59px;top:463px;" width="8" height="10" viewBox="0 0 8 10"><path d="M1 1 L7 5 L1 9 Z" fill="#6b6b6b"/></svg>
<svg style="left:74px;top:463px;" width="9" height="9" viewBox="0 0 9 9"><circle cx="4.5" cy="4.5" r="4.2" fill="#b00000"/></svg>
<div class="t" style="left:92.00px;top:458.00px;font-size:11.55px;line-height:20px;letter-spacing:0.427px;color:#000;">Modules</div>
<svg style="left:59px;top:482px;" width="8" height="10" viewBox="0 0 8 10"><path d="M1 1 L7 5 L1 9 Z" fill="#6b6b6b"/></svg>
<svg style="left:74px;top:482px;" width="9" height="9" viewBox="0 0 9 9"><circle cx="4.5" cy="4.5" r="4.2" fill="#b00000"/></svg>
<div class="t" style="left:92.00px;top:477.00px;font-size:11.55px;line-height:20px;letter-spacing:0.654px;color:#000;">Memory</div>
<svg style="left:58px;top:501px;" width="9" height="8" viewBox="0 0 9 8"><path d="M0.5 0.5 H8.5 L4.5 7.5 Z" fill="#6b6b6b"/></svg>
<svg style="left:74px;top:501px;" width="9" height="9" viewBox="0 0 9 9"><circle cx="4.5" cy="4.5" r="4.2" fill="#b00000"/></svg>
<div class="t" style="left:92.00px;top:495.88px;font-size:11.88px;line-height:20px;letter-spacing:0.693px;color:#000;font-weight:bold;">Threads</div>
<svg style="left:74px;top:520px;" width="9" height="8" viewBox="0 0 9 8"><path d="M0.5 0.5 H8.5 L4.5 7.5 Z" fill="#6b6b6b"/></svg>
<svg style="left:87px;top:518px;" width="16" height="12" viewBox="0 0 16 12"><path d="M1.5 3.5 H9 V0.8 L15 6 L9 11.2 V8.5 H1.5 Z" fill="#fff" stroke="#606060" stroke-width="2"/></svg>
<div style="left:0px;top:0px;width:461px;height:531px;overflow:hidden;">
<div class="t" style="left:108.00px;top:514.73px;font-size:12.32px;line-height:20px;letter-spacing:0.880px;color:#000;font-weight:bold;">[1.1:9099] termmines stopped at 0x0x0000000000400a</div>
</div>
<div style="left:461px;top:325px;width:1px;height:205px;background:#fff;"></div>
<div style="left:462px;top:325px;width:14px;height:206px;background:linear-gradient(to right,#c6c9cf,#e6e8eb 45%,#eef0f2);"></div>
<div style="left:462px;top:485px;width:13px;height:30px;background:linear-gradient(to right,#8e939b,#b9bdc4 30%,#cfd2d7 70%,#d8dadf);border-radius:0 0 10px 0;"></div>
<div style="left:463px;top:326px;width:11px;height:15px;background:linear-gradient(to right,#dfe1e5,#f4f5f7);"></div>
<svg style="left:462px;top:328px;" width="14" height="10" viewBox="0 0 14 10"><path d="M3.0 8 L7.0 1 L11.0 8 Z" fill="#333"/></svg>
<div style="left:463px;top:515px;width:11px;height:15px;background:linear-gradient(to right,#dfe1e5,#f4f5f7);"></div>
<svg style="left:462px;top:517px;" width="14" height="10" viewBox="0 0 14 10"><path d="M3.0 1 L7.0 8 L11.0 1 Z" fill="#333"/></svg>
<div style="left:461px;top:341px;width:14px;height:144px;box-sizing:border-box;border:1px solid #3d5a78;border-radius:0 9px 9px 0;border-left:none;background:linear-gradient(to right,#a8c1da,#d9e6f2 55%,#f0f5fa);"></div>
<div style="left:6px;top:531px;width:456px;height:16px;background:linear-gradient(#c6c9cf,#e6e8eb 45%,#eef0f2);"></div>
<div style="left:382px;top:531px;width:64px;height:15px;background:linear-gradient(#8e939b,#b9bdc4 30%,#cfd2d7 70%,#d8dadf);border-radius:0 0 10px 0;"></div>
<div style="left:7px;top:532px;width:15px;height:14px;background:linear-gradient(#dfe1e5,#f4f5f7);"></div>
<svg style="left:9px;top:531px;" width="10" height="16" viewBox="0 0 10 16"><path d="M8 4.0 L1 8.0 L8 12.0 Z" fill="#333"/></svg>
<div style="left:446px;top:532px;width:15px;height:14px;background:linear-gradient(#dfe1e5,#f4f5f7);"></div>
<svg style="left:449px;top:531px;" width="10" height="16" viewBox="0 0 10 16"><path d="M1 4.0 L8 8.0 L1 12.0 Z" fill="#333"/></svg>
<div style="left:22px;top:531px;width:360px;height:15px;box-sizing:border-box;border:1px solid #3d5a78;border-top:none;border-radius:0 0 12px 12px;background:linear-gradient(#f0f5fa,#d9e6f2 45%,#a8c1da);"></div>
<div style="left:462px;top:531px;width:15px;height:16px;background:#d6d9df;"></div>
<div style="left:3px;top:551px;width:476px;height:35px;box-sizing:border-box;border:1px solid #8f939a;border-right:none;border-bottom-color:#6f737a;"></div>
<div style="left:52px;top:556px;width:399px;height:23px;box-sizing:border-box;background:#fff;border:1px solid #b0b4ba;border-top-color:#8f939a;"></div>
<div class="t" style="left:9.00px;top:557.63px;font-size:12.6px;line-height:20px;letter-spacing:0.293px;color:#111;">Filter:</div>
<svg style="left:457px;top:559px;" width="17" height="17" viewBox="0 0 17 17"><path d="M3.6 0.6 H11.5 L15.4 4.5 V15.4 H3.6 Z" fill="#fff" stroke="#3a78d0" stroke-width="1.2" stroke-linejoin="round"/><rect x="5" y="2" width="9" height="9" fill="#cfe2f8"/><path d="M6.5 4 L2.2 7.8 L6.5 11.6 M8.8 4 L13 7.8 L8.8 11.6" stroke="#4a98e8" stroke-width="2" fill="none"/><rect x="5" y="11.6" width="9.5" height="2" fill="#5ab4f5"/></svg>
<div style="left:3px;top:592px;width:476px;height:1px;background:#8f939a;"></div>
<div style="left:3px;top:593px;width:476px;height:22px;background:linear-gradient(to right,#a8a8a8 0%,#a8a8a8 35%,#d6d9df 100%);box-shadow:inset 1px 1px 0 rgba(255,255,255,.3);"></div>
<svg style="left:5px;top:597px;" width="15" height="14" viewBox="0 0 15 14"><rect x="1" y="1" width="13" height="12" fill="#fff" stroke="#1f4fa8" stroke-width="2"/><path d="M3.5 4.5 L6 7 L3.5 9.5" stroke="#555" stroke-width="0.9" fill="none"/></svg>
<div class="t" style="left:24.00px;top:595.27px;font-size:13.65px;line-height:20px;letter-spacing:0.339px;color:#000;">Debug Console</div>
<svg style="left:436px;top:596px;" width="17" height="17" viewBox="0 0 17 17"><path d="M3 12 L12 1.5 L16 4.5 L7 15 Z" fill="#f2c230" stroke="#a07800" stroke-width="0.8"/><path d="M3 12 L7 15 L4 16 A2 2 0 0 1 2 14 Z" fill="#f0a0a0"/><path d="M9 15 H16" stroke="#e08080" stroke-width="0.8"/></svg>
<div style="left:457px;top:596px;width:1px;height:16px;background:#9a9ea5;"></div>
<svg style="left:462px;top:598px;" width="12" height="12" viewBox="0 0 12 12"><path d="M1.5 1.5 L10.5 10.5 M10.5 1.5 L1.5 10.5" stroke="#000" stroke-width="2.4"/></svg>
<div style="left:3px;top:615px;width:476px;height:1px;background:#8f939a;"></div>
<div style="left:55px;top:621px;width:398px;height:23px;box-sizing:border-box;background:#fff;border:1px solid #b0b4ba;border-top-color:#8f939a;"></div>
<div class="t" style="left:7.00px;top:622.63px;font-size:12.6px;line-height:20px;letter-spacing:0.293px;color:#111;">Filter:</div>
<svg style="left:459px;top:624px;" width="17" height="17" viewBox="0 0 17 17"><path d="M3.6 0.6 H11.5 L15.4 4.5 V15.4 H3.6 Z" fill="#fff" stroke="#3a78d0" stroke-width="1.2" stroke-linejoin="round"/><rect x="5" y="2" width="9" height="9" fill="#cfe2f8"/><path d="M6.5 4 L2.2 7.8 L6.5 11.6 M8.8 4 L13 7.8 L8.8 11.6" stroke="#4a98e8" stroke-width="2" fill="none"/><rect x="5" y="11.6" width="9.5" height="2" fill="#5ab4f5"/></svg>
<div style="left:2px;top:648px;width:478px;height:1px;background:#f0f1f3;"></div>
<div style="left:3px;top:651px;width:476px;height:136px;box-sizing:border-box;background:#fff;border:1px solid #8f939a;"></div>
<div style="left:4px;top:652px;width:474px;height:22px;box-sizing:border-box;background:linear-gradient(#fafbfc,#eef0f3 45%,#dcdfe4 55%,#eceef1);border-bottom:1px solid #8f939a;"></div>
<div style="left:27px;top:653px;width:1px;height:20px;background:#a8acb3;"></div>
<div style="left:250px;top:653px;width:1px;height:20px;background:#a8acb3;"></div>
<div style="left:373px;top:653px;width:1px;height:20px;background:#a8acb3;"></div>
<div style="left:462px;top:653px;width:1px;height:20px;background:#a8acb3;"></div>
<div class="t" style="left:9.00px;top:653.45px;font-size:13.12px;line-height:20px;letter-spacing:0.328px;color:#000;">...</div>
<div class="t" style="left:33.00px;top:653.45px;font-size:13.12px;line-height:20px;letter-spacing:0.253px;color:#000;">Message</div>
<div class="t" style="left:256.00px;top:653.45px;font-size:13.12px;line-height:20px;letter-spacing:0.384px;color:#000;">Acti...</div>
<svg style="left:331px;top:657px;" width="14" height="13" viewBox="0 0 14 13"><path d="M1 1 H10 M1 4 H8 M1 7 H6 M1 10 H4" stroke="#444" stroke-width="1"/><path d="M1 1 V12 L10 1" stroke="#444" fill="none"/></svg>
<div class="t" style="left:347.00px;top:652.32px;font-size:13.5px;line-height:20px;letter-spacing:1.190px;color:#000;font-weight:bold;">1</div>
<div class="t" style="left:379.00px;top:653.45px;font-size:13.12px;line-height:20px;letter-spacing:0.328px;color:#000;">...</div>
<svg style="left:420px;top:657px;" width="14" height="13" viewBox="0 0 14 13"><path d="M1 1 H10 M1 4 H8 M1 7 H6 M1 10 H4" stroke="#444" stroke-width="1"/><path d="M1 1 V12 L10 1" stroke="#444" fill="none"/></svg>
<div class="t" style="left:436.00px;top:652.32px;font-size:13.5px;line-height:20px;letter-spacing:1.190px;color:#000;font-weight:bold;">2</div>
<div style="left:4px;top:674px;width:458px;height:74px;background:#e9f0fb;"></div>
<div style="left:4px;top:748px;width:458px;height:31px;background:#fff;"></div>
<div style="left:4px;top:779px;width:458px;height:7px;background:#e9f0fb;"></div>
<div class="t" style="left:33.00px;top:671.45px;font-size:13.12px;line-height:20px;letter-spacing:0.536px;color:#222;">Selected first mapping offer:</div>
<div class="t" style="left:33.00px;top:686.45px;font-size:13.12px;line-height:20px;letter-spacing:0.478px;color:#222;">&lt;Offer: &#x27;GDB on Linux x86_64&#x27;</div>
<div class="t" style="left:33.00px;top:701.45px;font-size:13.12px;line-height:20px;letter-spacing:0.629px;color:#222;">lang=x86:LE:64:default cs=gcc</div>
<div class="t" style="left:33.00px;top:716.45px;font-size:13.12px;line-height:20px;letter-spacing:0.697px;color:#222;">confidence=100</div>
<div class="t" style="left:33.00px;top:731.45px;font-size:13.12px;line-height:20px;letter-spacing:0.871px;color:#222;">target=Inferiors[1]&gt;</div>
<div class="t" style="left:379.00px;top:701.45px;font-size:13.12px;line-height:20px;letter-spacing:0.532px;color:#222;">14:24:19....</div>
<div class="t" style="left:33.00px;top:746.45px;font-size:13.12px;line-height:20px;letter-spacing:0.536px;color:#222;">Generating offer for</div>
<div class="t" style="left:33.00px;top:761.45px;font-size:13.12px;line-height:20px;letter-spacing:0.575px;color:#222;">os=GNU/Linux arch=i386:x86-64</div>
<div class="t" style="left:379.00px;top:754.45px;font-size:13.12px;line-height:20px;letter-spacing:0.532px;color:#222;">14:24:19....</div>
<div style="left:4px;top:779px;width:458px;height:7px;overflow:hidden;"><div class="t" style="position:absolute;left:29px;top:-1px;font-size:13px;color:#222;letter-spacing:.4px">Recync: Missed loaded</div></div>
<div style="left:463px;top:674px;width:14px;height:112px;background:linear-gradient(to right,#c6c9cf,#e6e8eb 45%,#eef0f2);"></div>
<div style="left:463px;top:725px;width:13px;height:45px;background:linear-gradient(to right,#8e939b,#b9bdc4 30%,#cfd2d7 70%,#d8dadf);border-radius:0 0 10px 0;"></div>
<div style="left:464px;top:675px;width:11px;height:15px;background:linear-gradient(to right,#dfe1e5,#f4f5f7);"></div>
<svg style="left:463px;top:677px;" width="14" height="10" viewBox="0 0 14 10"><path d="M3.0 8 L7.0 1 L11.0 8 Z" fill="#333"/></svg>
<div style="left:464px;top:770px;width:11px;height:15px;background:linear-gradient(to right,#dfe1e5,#f4f5f7);"></div>
<svg style="left:463px;top:772px;" width="14" height="10" viewBox="0 0 14 10"><path d="M3.0 1 L7.0 8 L11.0 1 Z" fill="#333"/></svg>
<div style="left:462px;top:691px;width:14px;height:34px;box-sizing:border-box;border:1px solid #3d5a78;border-radius:0 9px 9px 0;border-left:none;background:linear-gradient(to right,#a8c1da,#d9e6f2 55%,#f0f5fa);"></div>
<div style="left:1px;top:787px;width:479px;height:33px;background:#d6d9df;"></div>
<div style="left:1px;top:789px;width:28px;height:1px;background:#2b4a66;"></div>
<div style="left:2px;top:793px;width:151px;height:23px;box-sizing:border-box;background:linear-gradient(#9db6cf,#b3c8dc 45%,#dfe8f1);border:1px solid #2f4760;border-top:none;border-radius:0 0 7px 7px;"></div>
<svg style="left:10px;top:797px;" width="15" height="14" viewBox="0 0 15 14"><rect x="1" y="1" width="13" height="12" fill="#fff" stroke="#1f4fa8" stroke-width="2"/><path d="M3.5 4.5 L6 7 L3.5 9.5" stroke="#555" stroke-width="0.9" fill="none"/></svg>
<div class="t" style="left:30.00px;top:794.45px;font-size:13.12px;line-height:20px;letter-spacing:0.328px;color:#000;">Debug Console</div>
<div class="t" style="left:133.00px;top:793.13px;font-size:14.04px;line-height:20px;letter-spacing:2.693px;color:#000;font-weight:bold;">×</div>
<svg style="left:453px;top:793px;" width="8" height="10" viewBox="0 0 8 10"><path d="M7 1 L1 5 L7 9 Z" fill="#000"/></svg>
<svg style="left:468px;top:793px;" width="8" height="10" viewBox="0 0 8 10"><path d="M1 1 L7 5 L1 9 Z" fill="#aaa"/></svg>
<div style="left:480px;top:78px;width:1px;height:742px;background:#5d6168;"></div>
<div style="left:481px;top:77px;width:4px;height:743px;background:#d6d9df;"></div>
<div style="left:485px;top:77px;width:2px;height:740px;background:#fff;"></div>
<div style="left:487px;top:78px;width:968px;height:372px;box-sizing:border-box;border:1px solid #8f939a;"></div>
<div style="left:488px;top:79px;width:966px;height:22px;background:linear-gradient(to right,#a8a8a8 0%,#a8a8a8 28%,#d6d9df 62%,#d6d9df 100%);box-shadow:inset 1px 1px 0 rgba(255,255,255,.3);"></div>
<svg style="left:493px;top:82px;" width="16" height="16" viewBox="0 0 16 16"><rect x="1" y="2" width="14" height="11" fill="#f3f3f3" stroke="#666" stroke-width="0.8"/><rect x="4" y="4" width="9" height="3" fill="#3a6ac0"/><rect x="4" y="8" width="9" height="3" fill="#8fc08f"/><path d="M2.5 3 V12" stroke="#222" stroke-dasharray="1 1"/><rect x="9" y="10" width="7" height="6" fill="#f0e000"/><circle cx="12.5" cy="13" r="1.8" fill="#444"/></svg>
<div class="t" style="left:510.00px;top:81.27px;font-size:13.65px;line-height:20px;letter-spacing:0.067px;color:#000;">Dynamic - Auto PC, 1 - process 9099 - _tmp_termmines 2023.04.17-14.24.19-EDT</div>
<svg style="left:1124px;top:83px;" width="16" height="16" viewBox="0 0 16 16"><path d="M1.5 1.5 H8 L10 3.5 V11.5 H1.5 Z" fill="#fff" stroke="#b0b0b0"/><path d="M5.5 4.5 H12 L14.5 7 V15.5 H5.5 Z" fill="#fff" stroke="#a0a0a0"/></svg>
<svg style="left:1146px;top:83px;" width="16" height="16" viewBox="0 0 16 16"><path d="M1.5 1.5 H8 L10 3.5 V11.5 H1.5 Z" fill="#b8b8b8" stroke="#b0b0b0"/><path d="M5.5 4.5 H12 L14.5 7 V15.5 H5.5 Z" fill="#b8b8b8" stroke="#a0a0a0"/></svg>
<div style="left:1172px;top:82px;width:1px;height:16px;background:#a3a7ae;"></div>
<svg style="left:1181px;top:82px;" width="16" height="16" viewBox="0 0 16 16"><path d="M2.5 7 A6 5.5 0 0 1 13 5" stroke="#4a90d9" stroke-width="2.4" fill="none"/><path d="M13.5 9 A6 5.5 0 0 1 3 11" stroke="#4a90d9" stroke-width="2.4" fill="none"/><path d="M11 1 L15 5 L10 6Z M5 15 L1 11 L6 10Z" fill="#4a90d9"/></svg>
<div style="left:1206px;top:82px;width:1px;height:16px;background:#a3a7ae;"></div>
<div style="left:1211px;top:80px;width:20px;height:20px;box-sizing:border-box;border:1px solid #8a8f97;background:linear-gradient(#f4f5f7,#dde0e5);border-radius:2px;"></div>
<svg style="left:1213px;top:82px;" width="16" height="16" viewBox="0 0 16 16"><path d="M2 1 L2 12 L5 9.5 L7 14 L9 13 L7 8.5 L11 8.5 Z" fill="#fff" stroke="#000" stroke-width="1"/><rect x="8" y="10" width="7" height="5" fill="#f2c230"/></svg>
<div style="left:1240px;top:82px;width:1px;height:16px;background:#a3a7ae;"></div>
<svg style="left:1248px;top:82px;" width="16" height="16" viewBox="0 0 16 16"><rect x="1" y="1" width="14" height="9" fill="#fff" stroke="#555"/><rect x="3" y="3" width="10" height="2" fill="#f2b000"/><rect x="3" y="6" width="10" height="2" fill="#999"/><path d="M8 10 V15 M5 12 L8 15 L11 12" stroke="#333" stroke-width="1.4" fill="none"/></svg>
<svg style="left:1270px;top:82px;" width="16" height="16" viewBox="0 0 16 16"><rect x="0.5" y="1" width="4" height="14" fill="#cfe3f7" stroke="#4a90d9" stroke-width="0.8"/><rect x="11.5" y="1" width="4" height="14" fill="#cfe3f7" stroke="#4a90d9" stroke-width="0.8"/><path d="M3 12 L8 7 L13 9" stroke="#30a030" stroke-width="2" fill="none"/></svg>
<div style="left:1296px;top:82px;width:1px;height:16px;background:#a3a7ae;"></div>
<svg style="left:1304px;top:82px;" width="16" height="16" viewBox="0 0 16 16"><rect x="1" y="4" width="14" height="11" rx="1.5" fill="#333"/><rect x="5" y="1.5" width="6" height="3.5" fill="#444" stroke="#222" stroke-width="0.6"/><circle cx="8" cy="9.5" r="3.5" fill="#777" stroke="#111"/><circle cx="8" cy="9.5" r="1.5" fill="#222"/></svg>
<div style="left:1330px;top:82px;width:1px;height:16px;background:#a3a7ae;"></div>
<svg style="left:1338px;top:84px;" width="16" height="12" viewBox="0 0 16 12"><path d="M1.5 4 H8 V1 L14.5 6 L8 11 V8 H1.5 Z" fill="#fff" stroke="#333" stroke-width="1.5"/></svg>
<svg style="left:1360px;top:88px;" width="7" height="4" viewBox="0 0 7 4"><path d="M0 0 H7 L3.5 3.8500000000000005 Z" fill="#000"/></svg>
<svg style="left:1376px;top:82px;" width="16" height="16" viewBox="0 0 16 16"><path d="M2 1 L14 8 L2 15 L5 8 Z" fill="none" stroke="#222" stroke-width="2"/></svg>
<svg style="left:1396px;top:88px;" width="7" height="4" viewBox="0 0 7 4"><path d="M0 0 H7 L3.5 3.8500000000000005 Z" fill="#000"/></svg>
<div style="left:1408px;top:82px;width:1px;height:16px;background:#a3a7ae;"></div>
<svg style="left:1414px;top:86px;" width="11" height="7" viewBox="0 0 11 7"><path d="M0 0 H11 L5.5 6.050000000000001 Z" fill="#000"/></svg>
<svg style="left:1435px;top:84px;" width="12" height="12" viewBox="0 0 12 12"><path d="M1.5 1.5 L10.5 10.5 M10.5 1.5 L1.5 10.5" stroke="#000" stroke-width="2.4"/></svg>
<div style="left:488px;top:101px;width:966px;height:1px;background:#8f939a;"></div>
<div class="t" style="left:487.00px;top:100.45px;font-size:13.12px;line-height:20px;letter-spacing:0.509px;color:#000;">/tmp/termmines:.text</div>
<div class="t" style="left:1357.00px;top:100.45px;font-size:13.12px;line-height:20px;letter-spacing:0.679px;color:#000;">pc = 00400ad0</div>
<div style="left:488px;top:118px;width:966px;height:1px;background:#8f939a;"></div>
<div style="left:488px;top:119px;width:17px;height:327px;background:#d6d9df;"></div>
<div style="left:505px;top:119px;width:915px;height:311px;background:#fff;"></div>
<div style="left:505px;top:177px;width:915px;height:16px;background:#d4e7dd;"></div>
<div style="left:1452px;top:119px;width:1px;height:330px;background:#a0a4ab;"></div>
<div style="left:505px;top:119px;width:915px;height:311px;overflow:hidden;">
<div class="t" style="left:58.50px;top:-7.06px;font-size:11.5px;line-height:20px;letter-spacing:0.028px;color:#000;font-family:'Liberation Mono',monospace;transform:scaleY(1.15);transform-origin:0 13.06px;">00400acc</div>
<div class="t" style="left:121.00px;top:-7.06px;font-size:11.5px;line-height:20px;letter-spacing:0.028px;color:#0000ee;font-family:'Liberation Mono',monospace;transform:scaleY(1.15);transform-origin:0 13.06px;">b0</div>
<div class="t" style="left:231.00px;top:-7.06px;font-size:11.5px;line-height:20px;letter-spacing:0.028px;color:#0000a0;font-family:'Liberation Mono',monospace;transform:scaleY(1.15);transform-origin:0 13.06px;">??</div>
<div class="t" style="left:311.00px;top:-7.06px;font-size:11.5px;line-height:20px;letter-spacing:0.028px;color:#008000;font-family:'Liberation Mono',monospace;transform:scaleY(1.15);transform-origin:0 13.06px;">B0h</div>
<div class="t" style="left:58.50px;top:8.94px;font-size:11.5px;line-height:20px;letter-spacing:0.028px;color:#000;font-family:'Liberation Mono',monospace;transform:scaleY(1.15);transform-origin:0 13.06px;">00400acd</div>
<div class="t" style="left:121.00px;top:8.94px;font-size:11.5px;line-height:20px;letter-spacing:0.028px;color:#0000ee;font-family:'Liberation Mono',monospace;transform:scaleY(1.15);transform-origin:0 13.06px;">fe</div>
<div class="t" style="left:231.00px;top:8.94px;font-size:11.5px;line-height:20px;letter-spacing:0.028px;color:#0000a0;font-family:'Liberation Mono',monospace;transform:scaleY(1.15);transform-origin:0 13.06px;">??</div>
<div class="t" style="left:311.00px;top:8.94px;font-size:11.5px;line-height:20px;letter-spacing:0.028px;color:#008000;font-family:'Liberation Mono',monospace;transform:scaleY(1.15);transform-origin:0 13.06px;">FEh</div>
<div class="t" style="left:58.50px;top:24.94px;font-size:11.5px;line-height:20px;letter-spacing:0.028px;color:#000;font-family:'Liberation Mono',monospace;transform:scaleY(1.15);transform-origin:0 13.06px;">00400ace</div>
<div class="t" style="left:121.00px;top:24.94px;font-size:11.5px;line-height:20px;letter-spacing:0.028px;color:#0000ee;font-family:'Liberation Mono',monospace;transform:scaleY(1.15);transform-origin:0 13.06px;">ff</div>
<div class="t" style="left:231.00px;top:24.94px;font-size:11.5px;line-height:20px;letter-spacing:0.028px;color:#0000a0;font-family:'Liberation Mono',monospace;transform:scaleY(1.15);transform-origin:0 13.06px;">??</div>
<div class="t" style="left:311.00px;top:24.94px;font-size:11.5px;line-height:20px;letter-spacing:0.028px;color:#008000;font-family:'Liberation Mono',monospace;transform:scaleY(1.15);transform-origin:0 13.06px;">FFh</div>
<div class="t" style="left:58.50px;top:40.94px;font-size:11.5px;line-height:20px;letter-spacing:0.028px;color:#000;font-family:'Liberation Mono',monospace;transform:scaleY(1.15);transform-origin:0 13.06px;">00400acf</div>
<div class="t" style="left:121.00px;top:40.94px;font-size:11.5px;line-height:20px;letter-spacing:0.028px;color:#0000ee;font-family:'Liberation Mono',monospace;transform:scaleY(1.15);transform-origin:0 13.06px;">ff</div>
<div class="t" style="left:231.00px;top:40.94px;font-size:11.5px;line-height:20px;letter-spacing:0.028px;color:#0000a0;font-family:'Liberation Mono',monospace;transform:scaleY(1.15);transform-origin:0 13.06px;">??</div>
<div class="t" style="left:311.00px;top:40.94px;font-size:11.5px;line-height:20px;letter-spacing:0.028px;color:#008000;font-family:'Liberation Mono',monospace;transform:scaleY(1.15);transform-origin:0 13.06px;">FFh</div>
<div class="t" style="left:58.50px;top:56.94px;font-size:11.5px;line-height:20px;letter-spacing:0.028px;color:#000;font-family:'Liberation Mono',monospace;transform:scaleY(1.15);transform-origin:0 13.06px;">00400ad0</div>
<div class="t" style="left:121.00px;top:56.94px;font-size:11.5px;line-height:20px;letter-spacing:0.028px;color:#0000ee;font-family:'Liberation Mono',monospace;transform:scaleY(1.15);transform-origin:0 13.06px;">53</div>
<div class="t" style="left:231.00px;top:56.94px;font-size:11.5px;line-height:20px;letter-spacing:0.028px;color:#000080;font-family:'Liberation Mono',monospace;transform:scaleY(1.15);transform-origin:0 13.06px;">PUSH</div>
<div class="t" style="left:311.00px;top:56.94px;font-size:11.5px;line-height:20px;letter-spacing:0.028px;color:#808000;font-family:'Liberation Mono',monospace;transform:scaleY(1.15);transform-origin:0 13.06px;">RBX</div>
<div class="t" style="left:58.50px;top:72.94px;font-size:11.5px;line-height:20px;letter-spacing:0.028px;color:#000;font-family:'Liberation Mono',monospace;transform:scaleY(1.15);transform-origin:0 13.06px;">00400ad1</div>
<div class="t" style="left:121.00px;top:72.94px;font-size:11.5px;line-height:20px;letter-spacing:0.028px;color:#0000ee;font-family:'Liberation Mono',monospace;transform:scaleY(1.15);transform-origin:0 13.06px;">e8 3a 05</div>
<div class="t" style="left:231.00px;top:72.94px;font-size:11.5px;line-height:20px;letter-spacing:0.028px;color:#000080;font-family:'Liberation Mono',monospace;transform:scaleY(1.15);transform-origin:0 13.06px;">CALL</div>
<div class="t" style="left:311.00px;top:72.94px;font-size:11.5px;line-height:20px;letter-spacing:0.028px;color:#000;font-family:'Liberation Mono',monospace;transform:scaleY(1.15);transform-origin:0 13.06px;">00401010</div>
<div class="t" style="left:121.00px;top:88.94px;font-size:11.5px;line-height:20px;letter-spacing:0.028px;color:#0000ee;font-family:'Liberation Mono',monospace;transform:scaleY(1.15);transform-origin:0 13.06px;">00 00</div>
<div class="t" style="left:58.50px;top:104.94px;font-size:11.5px;line-height:20px;letter-spacing:0.028px;color:#000;font-family:'Liberation Mono',monospace;transform:scaleY(1.15);transform-origin:0 13.06px;">00400ad6</div>
<div class="t" style="left:121.00px;top:104.94px;font-size:11.5px;line-height:20px;letter-spacing:0.028px;color:#0000ee;font-family:'Liberation Mono',monospace;transform:scaleY(1.15);transform-origin:0 13.06px;">31</div>
<div class="t" style="left:231.00px;top:104.94px;font-size:11.5px;line-height:20px;letter-spacing:0.028px;color:#0000a0;font-family:'Liberation Mono',monospace;transform:scaleY(1.15);transform-origin:0 13.06px;">??</div>
<div class="t" style="left:311.00px;top:104.94px;font-size:11.5px;line-height:20px;letter-spacing:0.028px;color:#008000;font-family:'Liberation Mono',monospace;transform:scaleY(1.15);transform-origin:0 13.06px;">31h</div>
<div class="t" style="left:360.00px;top:104.94px;font-size:11.5px;line-height:20px;letter-spacing:0.028px;color:#008000;font-family:'Liberation Mono',monospace;transform:scaleY(1.15);transform-origin:0 13.06px;">1</div>
<div class="t" style="left:58.50px;top:120.94px;font-size:11.5px;line-height:20px;letter-spacing:0.028px;color:#000;font-family:'Liberation Mono',monospace;transform:scaleY(1.15);transform-origin:0 13.06px;">00400ad7</div>
<div class="t" style="left:121.00px;top:120.94px;font-size:11.5px;line-height:20px;letter-spacing:0.028px;color:#0000ee;font-family:'Liberation Mono',monospace;transform:scaleY(1.15);transform-origin:0 13.06px;">ff</div>
<div class="t" style="left:231.00px;top:120.94px;font-size:11.5px;line-height:20px;letter-spacing:0.028px;color:#0000a0;font-family:'Liberation Mono',monospace;transform:scaleY(1.15);transform-origin:0 13.06px;">??</div>
<div class="t" style="left:311.00px;top:120.94px;font-size:11.5px;line-height:20px;letter-spacing:0.028px;color:#008000;font-family:'Liberation Mono',monospace;transform:scaleY(1.15);transform-origin:0 13.06px;">FFh</div>
<div class="t" style="left:58.50px;top:136.94px;font-size:11.5px;line-height:20px;letter-spacing:0.028px;color:#000;font-family:'Liberation Mono',monospace;transform:scaleY(1.15);transform-origin:0 13.06px;">00400ad8</div>
<div class="t" style="left:121.00px;top:136.94px;font-size:11.5px;line-height:20px;letter-spacing:0.028px;color:#0000ee;font-family:'Liberation Mono',monospace;transform:scaleY(1.15);transform-origin:0 13.06px;">e8</div>
<div class="t" style="left:231.00px;top:136.94px;font-size:11.5px;line-height:20px;letter-spacing:0.028px;color:#0000a0;font-family:'Liberation Mono',monospace;transform:scaleY(1.15);transform-origin:0 13.06px;">??</div>
<div class="t" style="left:311.00px;top:136.94px;font-size:11.5px;line-height:20px;letter-spacing:0.028px;color:#008000;font-family:'Liberation Mono',monospace;transform:scaleY(1.15);transform-origin:0 13.06px;">E8h</div>
<div class="t" style="left:58.50px;top:152.94px;font-size:11.5px;line-height:20px;letter-spacing:0.028px;color:#000;font-family:'Liberation Mono',monospace;transform:scaleY(1.15);transform-origin:0 13.06px;">00400ad9</div>
<div class="t" style="left:121.00px;top:152.94px;font-size:11.5px;line-height:20px;letter-spacing:0.028px;color:#0000ee;font-family:'Liberation Mono',monospace;transform:scaleY(1.15);transform-origin:0 13.06px;">53</div>
<div class="t" style="left:231.00px;top:152.94px;font-size:11.5px;line-height:20px;letter-spacing:0.028px;color:#0000a0;font-family:'Liberation Mono',monospace;transform:scaleY(1.15);transform-origin:0 13.06px;">??</div>
<div class="t" style="left:311.00px;top:152.94px;font-size:11.5px;line-height:20px;letter-spacing:0.028px;color:#008000;font-family:'Liberation Mono',monospace;transform:scaleY(1.15);transform-origin:0 13.06px;">53h</div>
<div class="t" style="left:360.00px;top:152.94px;font-size:11.5px;line-height:20px;letter-spacing:0.028px;color:#008000;font-family:'Liberation Mono',monospace;transform:scaleY(1.15);transform-origin:0 13.06px;">S</div>
<div class="t" style="left:58.50px;top:168.94px;font-size:11.5px;line-height:20px;letter-spacing:0.028px;color:#000;font-family:'Liberation Mono',monospace;transform:scaleY(1.15);transform-origin:0 13.06px;">00400ada</div>
<div class="t" style="left:121.00px;top:168.94px;font-size:11.5px;line-height:20px;letter-spacing:0.028px;color:#0000ee;font-family:'Liberation Mono',monospace;transform:scaleY(1.15);transform-origin:0 13.06px;">ff</div>
<div class="t" style="left:231.00px;top:168.94px;font-size:11.5px;line-height:20px;letter-spacing:0.028px;color:#0000a0;font-family:'Liberation Mono',monospace;transform:scaleY(1.15);transform-origin:0 13.06px;">??</div>
<div class="t" style="left:311.00px;top:168.94px;font-size:11.5px;line-height:20px;letter-spacing:0.028px;color:#008000;font-family:'Liberation Mono',monospace;transform:scaleY(1.15);transform-origin:0 13.06px;">FFh</div>
<div class="t" style="left:58.50px;top:184.94px;font-size:11.5px;line-height:20px;letter-spacing:0.028px;color:#000;font-family:'Liberation Mono',monospace;transform:scaleY(1.15);transform-origin:0 13.06px;">00400adb</div>
<div class="t" style="left:121.00px;top:184.94px;font-size:11.5px;line-height:20px;letter-spacing:0.028px;color:#0000ee;font-family:'Liberation Mono',monospace;transform:scaleY(1.15);transform-origin:0 13.06px;">ff</div>
<div class="t" style="left:231.00px;top:184.94px;font-size:11.5px;line-height:20px;letter-spacing:0.028px;color:#0000a0;font-family:'Liberation Mono',monospace;transform:scaleY(1.15);transform-origin:0 13.06px;">??</div>
<div class="t" style="left:311.00px;top:184.94px;font-size:11.5px;line-height:20px;letter-spacing:0.028px;color:#008000;font-family:'Liberation Mono',monospace;transform:scaleY(1.15);transform-origin:0 13.06px;">FFh</div>
<div class="t" style="left:58.50px;top:200.94px;font-size:11.5px;line-height:20px;letter-spacing:0.028px;color:#000;font-family:'Liberation Mono',monospace;transform:scaleY(1.15);transform-origin:0 13.06px;">00400adc</div>
<div class="t" style="left:121.00px;top:200.94px;font-size:11.5px;line-height:20px;letter-spacing:0.028px;color:#0000ee;font-family:'Liberation Mono',monospace;transform:scaleY(1.15);transform-origin:0 13.06px;">ff</div>
<div class="t" style="left:231.00px;top:200.94px;font-size:11.5px;line-height:20px;letter-spacing:0.028px;color:#0000a0;font-family:'Liberation Mono',monospace;transform:scaleY(1.15);transform-origin:0 13.06px;">??</div>
<div class="t" style="left:311.00px;top:200.94px;font-size:11.5px;line-height:20px;letter-spacing:0.028px;color:#008000;font-family:'Liberation Mono',monospace;transform:scaleY(1.15);transform-origin:0 13.06px;">FFh</div>
<div class="t" style="left:58.50px;top:216.94px;font-size:11.5px;line-height:20px;letter-spacing:0.028px;color:#000;font-family:'Liberation Mono',monospace;transform:scaleY(1.15);transform-origin:0 13.06px;">00400add</div>
<div class="t" style="left:121.00px;top:216.94px;font-size:11.5px;line-height:20px;letter-spacing:0.028px;color:#0000ee;font-family:'Liberation Mono',monospace;transform:scaleY(1.15);transform-origin:0 13.06px;">0f</div>
<div class="t" style="left:231.00px;top:216.94px;font-size:11.5px;line-height:20px;letter-spacing:0.028px;color:#0000a0;font-family:'Liberation Mono',monospace;transform:scaleY(1.15);transform-origin:0 13.06px;">??</div>
<div class="t" style="left:311.00px;top:216.94px;font-size:11.5px;line-height:20px;letter-spacing:0.028px;color:#008000;font-family:'Liberation Mono',monospace;transform:scaleY(1.15);transform-origin:0 13.06px;">0Fh</div>
<div class="t" style="left:58.50px;top:232.94px;font-size:11.5px;line-height:20px;letter-spacing:0.028px;color:#000;font-family:'Liberation Mono',monospace;transform:scaleY(1.15);transform-origin:0 13.06px;">00400ade</div>
<div class="t" style="left:121.00px;top:232.94px;font-size:11.5px;line-height:20px;letter-spacing:0.028px;color:#0000ee;font-family:'Liberation Mono',monospace;transform:scaleY(1.15);transform-origin:0 13.06px;">b7</div>
<div class="t" style="left:231.00px;top:232.94px;font-size:11.5px;line-height:20px;letter-spacing:0.028px;color:#0000a0;font-family:'Liberation Mono',monospace;transform:scaleY(1.15);transform-origin:0 13.06px;">??</div>
<div class="t" style="left:311.00px;top:232.94px;font-size:11.5px;line-height:20px;letter-spacing:0.028px;color:#008000;font-family:'Liberation Mono',monospace;transform:scaleY(1.15);transform-origin:0 13.06px;">B7h</div>
<div class="t" style="left:58.50px;top:248.94px;font-size:11.5px;line-height:20px;letter-spacing:0.028px;color:#000;font-family:'Liberation Mono',monospace;transform:scaleY(1.15);transform-origin:0 13.06px;">00400adf</div>
<div class="t" style="left:121.00px;top:248.94px;font-size:11.5px;line-height:20px;letter-spacing:0.028px;color:#0000ee;font-family:'Liberation Mono',monospace;transform:scaleY(1.15);transform-origin:0 13.06px;">f8</div>
<div class="t" style="left:231.00px;top:248.94px;font-size:11.5px;line-height:20px;letter-spacing:0.028px;color:#0000a0;font-family:'Liberation Mono',monospace;transform:scaleY(1.15);transform-origin:0 13.06px;">??</div>
<div class="t" style="left:311.00px;top:248.94px;font-size:11.5px;line-height:20px;letter-spacing:0.028px;color:#008000;font-family:'Liberation Mono',monospace;transform:scaleY(1.15);transform-origin:0 13.06px;">F8h</div>
<div class="t" style="left:58.50px;top:264.94px;font-size:11.5px;line-height:20px;letter-spacing:0.028px;color:#000;font-family:'Liberation Mono',monospace;transform:scaleY(1.15);transform-origin:0 13.06px;">00400ae0</div>
<div class="t" style="left:121.00px;top:264.94px;font-size:11.5px;line-height:20px;letter-spacing:0.028px;color:#0000ee;font-family:'Liberation Mono',monospace;transform:scaleY(1.15);transform-origin:0 13.06px;">81</div>
<div class="t" style="left:231.00px;top:264.94px;font-size:11.5px;line-height:20px;letter-spacing:0.028px;color:#0000a0;font-family:'Liberation Mono',monospace;transform:scaleY(1.15);transform-origin:0 13.06px;">??</div>
<div class="t" style="left:311.00px;top:264.94px;font-size:11.5px;line-height:20px;letter-spacing:0.028px;color:#008000;font-family:'Liberation Mono',monospace;transform:scaleY(1.15);transform-origin:0 13.06px;">81h</div>
<div class="t" style="left:58.50px;top:280.94px;font-size:11.5px;line-height:20px;letter-spacing:0.028px;color:#000;font-family:'Liberation Mono',monospace;transform:scaleY(1.15);transform-origin:0 13.06px;">00400ae1</div>
<div class="t" style="left:121.00px;top:280.94px;font-size:11.5px;line-height:20px;letter-spacing:0.028px;color:#0000ee;font-family:'Liberation Mono',monospace;transform:scaleY(1.15);transform-origin:0 13.06px;">cf</div>
<div class="t" style="left:231.00px;top:280.94px;font-size:11.5px;line-height:20px;letter-spacing:0.028px;color:#0000a0;font-family:'Liberation Mono',monospace;transform:scaleY(1.15);transform-origin:0 13.06px;">??</div>
<div class="t" style="left:311.00px;top:280.94px;font-size:11.5px;line-height:20px;letter-spacing:0.028px;color:#008000;font-family:'Liberation Mono',monospace;transform:scaleY(1.15);transform-origin:0 13.06px;">CFh</div>
<div class="t" style="left:58.50px;top:296.94px;font-size:11.5px;line-height:20px;letter-spacing:0.028px;color:#000;font-family:'Liberation Mono',monospace;transform:scaleY(1.15);transform-origin:0 13.06px;">00400ae2</div>
<div class="t" style="left:121.00px;top:296.94px;font-size:11.5px;line-height:20px;letter-spacing:0.028px;color:#0000ee;font-family:'Liberation Mono',monospace;transform:scaleY(1.15);transform-origin:0 13.06px;">00</div>
<div class="t" style="left:231.00px;top:296.94px;font-size:11.5px;line-height:20px;letter-spacing:0.028px;color:#0000a0;font-family:'Liberation Mono',monospace;transform:scaleY(1.15);transform-origin:0 13.06px;">??</div>
<div class="t" style="left:311.00px;top:296.94px;font-size:11.5px;line-height:20px;letter-spacing:0.028px;color:#008000;font-family:'Liberation Mono',monospace;transform:scaleY(1.15);transform-origin:0 13.06px;">00h</div>
</div>
<div style="left:563px;top:179px;width:2px;height:12px;background:#f4a6b8;"></div>
<div style="left:1420px;top:119px;width:16px;height:311px;background:linear-gradient(to right,#c6c9cf,#e6e8eb 45%,#eef0f2);"></div>
<div style="left:1420px;top:165px;width:15px;height:249px;background:linear-gradient(to right,#8e939b,#b9bdc4 30%,#cfd2d7 70%,#d8dadf);border-radius:0 0 10px 0;"></div>
<div style="left:1421px;top:120px;width:13px;height:15px;background:linear-gradient(to right,#dfe1e5,#f4f5f7);"></div>
<svg style="left:1420px;top:122px;" width="16" height="10" viewBox="0 0 16 10"><path d="M4.0 8 L8.0 1 L12.0 8 Z" fill="#333"/></svg>
<div style="left:1421px;top:414px;width:13px;height:15px;background:linear-gradient(to right,#dfe1e5,#f4f5f7);"></div>
<svg style="left:1420px;top:416px;" width="16" height="10" viewBox="0 0 16 10"><path d="M4.0 1 L8.0 8 L12.0 1 Z" fill="#333"/></svg>
<div style="left:1419px;top:136px;width:16px;height:29px;box-sizing:border-box;border:1px solid #3d5a78;border-radius:0 9px 9px 0;border-left:none;background:linear-gradient(to right,#a8c1da,#d9e6f2 55%,#f0f5fa);"></div>
<div style="left:1436px;top:119px;width:16px;height:311px;background:#d6d9df;"></div>
<div style="left:505px;top:430px;width:915px;height:16px;background:linear-gradient(#c6c9cf,#e6e8eb 45%,#eef0f2);"></div>
<div style="left:1296px;top:430px;width:108px;height:15px;background:linear-gradient(#8e939b,#b9bdc4 30%,#cfd2d7 70%,#d8dadf);border-radius:0 0 10px 0;"></div>
<div style="left:506px;top:431px;width:15px;height:14px;background:linear-gradient(#dfe1e5,#f4f5f7);"></div>
<svg style="left:508px;top:430px;" width="10" height="16" viewBox="0 0 10 16"><path d="M8 4.0 L1 8.0 L8 12.0 Z" fill="#333"/></svg>
<div style="left:1404px;top:431px;width:15px;height:14px;background:linear-gradient(#dfe1e5,#f4f5f7);"></div>
<svg style="left:1407px;top:430px;" width="10" height="16" viewBox="0 0 10 16"><path d="M1 4.0 L8 8.0 L1 12.0 Z" fill="#333"/></svg>
<div style="left:522px;top:430px;width:774px;height:15px;box-sizing:border-box;border:1px solid #3d5a78;border-top:none;border-radius:0 0 12px 12px;background:linear-gradient(#f0f5fa,#d9e6f2 45%,#a8c1da);"></div>
<div style="left:1420px;top:430px;width:32px;height:16px;background:#d6d9df;"></div>
<div style="left:485px;top:454px;width:970px;height:1px;background:#fff;"></div>
<div style="left:487px;top:456px;width:968px;height:361px;box-sizing:border-box;border:1px solid #8f939a;"></div>
<div style="left:488px;top:457px;width:966px;height:22px;background:linear-gradient(to right,#a8a8a8 0%,#a8a8a8 28%,#d6d9df 75%,#d6d9df 100%);box-shadow:inset 1px 1px 0 rgba(255,255,255,.3);"></div>
<svg style="left:493px;top:461px;" width="16" height="16" viewBox="0 0 16 16"><rect x="1" y="2" width="14" height="11" fill="#f3f3f3" stroke="#666" stroke-width="0.8"/><rect x="4" y="4" width="9" height="3" fill="#3a6ac0"/><rect x="4" y="8" width="9" height="3" fill="#8fc08f"/><path d="M2.5 3 V12" stroke="#222" stroke-dasharray="1 1"/></svg>
<div class="t" style="left:510.00px;top:460.27px;font-size:13.65px;line-height:20px;letter-spacing:0.182px;color:#000;">Listing:  termmines</div>
<svg style="left:1216px;top:461px;" width="16" height="16" viewBox="0 0 16 16"><path d="M1.5 1.5 H8 L10 3.5 V11.5 H1.5 Z" fill="#fff" stroke="#b0b0b0"/><path d="M5.5 4.5 H12 L14.5 7 V15.5 H5.5 Z" fill="#fff" stroke="#a0a0a0"/></svg>
<svg style="left:1238px;top:461px;" width="16" height="16" viewBox="0 0 16 16"><path d="M1.5 1.5 H8 L10 3.5 V11.5 H1.5 Z" fill="#b8b8b8" stroke="#b0b0b0"/><path d="M5.5 4.5 H12 L14.5 7 V15.5 H5.5 Z" fill="#b8b8b8" stroke="#a0a0a0"/></svg>
<div style="left:1262px;top:460px;width:1px;height:16px;background:#a3a7ae;"></div>
<div style="left:1269px;top:458px;width:20px;height:20px;box-sizing:border-box;border:1px solid #8a8f97;background:linear-gradient(#f4f5f7,#dde0e5);border-radius:2px;"></div>
<svg style="left:1271px;top:460px;" width="16" height="16" viewBox="0 0 16 16"><path d="M2 1 L2 12 L5 9.5 L7 14 L9 13 L7 8.5 L11 8.5 Z" fill="#fff" stroke="#000" stroke-width="1"/><rect x="8" y="10" width="7" height="5" fill="#f2c230"/></svg>
<div style="left:1296px;top:460px;width:1px;height:16px;background:#a3a7ae;"></div>
<svg style="left:1305px;top:460px;" width="16" height="16" viewBox="0 0 16 16"><rect x="1" y="1" width="14" height="9" fill="#fff" stroke="#555"/><rect x="3" y="3" width="10" height="2" fill="#f2b000"/><rect x="3" y="6" width="10" height="2" fill="#999"/><path d="M8 10 V15 M5 12 L8 15 L11 12" stroke="#333" stroke-width="1.4" fill="none"/></svg>
<svg style="left:1328px;top:460px;" width="16" height="16" viewBox="0 0 16 16"><rect x="0.5" y="1" width="4" height="14" fill="#cfe3f7" stroke="#4a90d9" stroke-width="0.8"/><rect x="11.5" y="1" width="4" height="14" fill="#cfe3f7" stroke="#4a90d9" stroke-width="0.8"/><path d="M3 12 L8 7 L13 9" stroke="#30a030" stroke-width="2" fill="none"/></svg>
<div style="left:1352px;top:460px;width:1px;height:16px;background:#a3a7ae;"></div>
<svg style="left:1361px;top:460px;" width="16" height="16" viewBox="0 0 16 16"><rect x="1" y="4" width="14" height="11" rx="1.5" fill="#333"/><rect x="5" y="1.5" width="6" height="3.5" fill="#444" stroke="#222" stroke-width="0.6"/><circle cx="8" cy="9.5" r="3.5" fill="#777" stroke="#111"/><circle cx="8" cy="9.5" r="1.5" fill="#222"/></svg>
<div style="left:1387px;top:460px;width:1px;height:16px;background:#a3a7ae;"></div>
<svg style="left:1396px;top:460px;" width="16" height="16" viewBox="0 0 16 16"><rect x="1" y="2" width="11" height="13" fill="#fff" stroke="#444" stroke-dasharray="1 1"/><rect x="3" y="8" width="6" height="4" fill="#4a90d9"/><rect x="12" y="1" width="3" height="15" fill="#f2b000"/></svg>
<svg style="left:1418px;top:466px;" width="7" height="4" viewBox="0 0 7 4"><path d="M0 0 H7 L3.5 3.8500000000000005 Z" fill="#000"/></svg>
<div style="left:1428px;top:460px;width:1px;height:16px;background:#a3a7ae;"></div>
<svg style="left:1435px;top:462px;" width="12" height="12" viewBox="0 0 12 12"><path d="M1.5 1.5 L10.5 10.5 M10.5 1.5 L1.5 10.5" stroke="#000" stroke-width="2.4"/></svg>
<div style="left:488px;top:479px;width:966px;height:1px;background:#8f939a;"></div>
<div style="left:488px;top:480px;width:966px;height:336px;background:#d6d9df;"></div>
<div style="left:503px;top:480px;width:70px;height:336px;background:#fff;"></div>
<div style="left:573px;top:480px;width:6px;height:336px;background:#d6d9df;box-shadow:inset -1px 0 0 #c3c6cc;"></div>
<div style="left:575px;top:636px;width:3px;height:20px;box-sizing:border-box;border:1px solid #9a9ea5;border-radius:2px;background:#e6e8ec;"></div>
<div style="left:580px;top:482px;width:840px;height:316px;box-sizing:border-box;background:#fff;border-top:1px solid #a0a4ab;border-left:1px solid #a0a4ab;"></div>
<div style="left:581px;top:483px;width:839px;height:80px;background:#d4e7dd;"></div>
<div style="left:581px;top:483px;width:839px;height:315px;overflow:hidden;">
<div class="t" style="left:199.00px;top:-1.76px;font-size:11.5px;line-height:20px;letter-spacing:0.028px;color:#ff00ff;font-family:'Liberation Mono',monospace;transform:scaleY(1.15);transform-origin:0 13.06px;">main</div>
<div class="t" style="left:537.00px;top:-1.76px;font-size:11.5px;line-height:20px;letter-spacing:0.028px;color:#008000;font-family:'Liberation Mono',monospace;transform:scaleY(1.15);transform-origin:0 13.06px;">XREF[5]:</div>
<div class="t" style="left:627.00px;top:-1.76px;font-size:11.5px;line-height:20px;letter-spacing:0.028px;color:#008000;font-family:'Liberation Mono',monospace;transform:scaleY(1.15);transform-origin:0 13.06px;">Entry Point(*),</div>
<div class="t" style="left:627.00px;top:14.24px;font-size:11.5px;line-height:20px;letter-spacing:0.028px;color:#008000;font-family:'Liberation Mono',monospace;transform:scaleY(1.15);transform-origin:0 13.06px;">FUN_00400d30:00400d4d(*),</div>
<div class="t" style="left:627.00px;top:30.24px;font-size:11.5px;line-height:20px;letter-spacing:0.028px;color:#008000;font-family:'Liberation Mono',monospace;transform:scaleY(1.15);transform-origin:0 13.06px;">00402984, 00402f00(*),</div>
<div class="t" style="left:627.00px;top:46.24px;font-size:11.5px;line-height:20px;letter-spacing:0.028px;color:#008000;font-family:'Liberation Mono',monospace;transform:scaleY(1.15);transform-origin:0 13.06px;">_elfSectionHeaders::00000350(*)</div>
<div class="t" style="left:56.00px;top:62.24px;font-size:11.5px;line-height:20px;letter-spacing:0.028px;color:#000;font-family:'Liberation Mono',monospace;transform:scaleY(1.15);transform-origin:0 13.06px;">00400ad0</div>
<div class="t" style="left:119.50px;top:62.24px;font-size:11.5px;line-height:20px;letter-spacing:0.028px;color:#0000ee;font-family:'Liberation Mono',monospace;transform:scaleY(1.15);transform-origin:0 13.06px;">53</div>
<div class="t" style="left:229.00px;top:62.24px;font-size:11.5px;line-height:20px;letter-spacing:0.028px;color:#000080;font-family:'Liberation Mono',monospace;transform:scaleY(1.15);transform-origin:0 13.06px;">PUSH</div>
<div class="t" style="left:309.00px;top:62.24px;font-size:11.5px;line-height:20px;letter-spacing:0.028px;color:#808000;font-family:'Liberation Mono',monospace;transform:scaleY(1.15);transform-origin:0 13.06px;">RBX</div>
<div class="t" style="left:56.00px;top:78.24px;font-size:11.5px;line-height:20px;letter-spacing:0.028px;color:#000;font-family:'Liberation Mono',monospace;transform:scaleY(1.15);transform-origin:0 13.06px;">00400ad1</div>
<div class="t" style="left:119.50px;top:78.24px;font-size:11.5px;line-height:20px;letter-spacing:0.028px;color:#0000ee;font-family:'Liberation Mono',monospace;transform:scaleY(1.15);transform-origin:0 13.06px;">e8 3a 05</div>
<div class="t" style="left:229.00px;top:78.24px;font-size:11.5px;line-height:20px;letter-spacing:0.028px;color:#000080;font-family:'Liberation Mono',monospace;transform:scaleY(1.15);transform-origin:0 13.06px;">CALL</div>
<div class="t" style="left:309.00px;top:78.24px;font-size:11.5px;line-height:20px;letter-spacing:0.028px;color:#0000ee;font-family:'Liberation Mono',monospace;transform:scaleY(1.15);transform-origin:0 13.06px;">FUN_00401010</div>
<div class="t" style="left:649.00px;top:78.24px;font-size:11.5px;line-height:20px;letter-spacing:0.028px;color:#bdbdbd;font-family:'Liberation Mono',monospace;transform:scaleY(1.15);transform-origin:0 13.06px;">undefined FUN_00401010()</div>
<div class="t" style="left:119.50px;top:94.24px;font-size:11.5px;line-height:20px;letter-spacing:0.028px;color:#0000ee;font-family:'Liberation Mono',monospace;transform:scaleY(1.15);transform-origin:0 13.06px;">00 00</div>
<div class="t" style="left:56.00px;top:110.24px;font-size:11.5px;line-height:20px;letter-spacing:0.028px;color:#000;font-family:'Liberation Mono',monospace;transform:scaleY(1.15);transform-origin:0 13.06px;">00400ad6</div>
<div class="t" style="left:119.50px;top:110.24px;font-size:11.5px;line-height:20px;letter-spacing:0.028px;color:#0000ee;font-family:'Liberation Mono',monospace;transform:scaleY(1.15);transform-origin:0 13.06px;">31 ff</div>
<div class="t" style="left:229.00px;top:110.24px;font-size:11.5px;line-height:20px;letter-spacing:0.028px;color:#000080;font-family:'Liberation Mono',monospace;transform:scaleY(1.15);transform-origin:0 13.06px;">XOR</div>
<div class="t" style="left:309.00px;top:110.24px;font-size:11.5px;line-height:20px;letter-spacing:0.028px;color:#808000;font-family:'Liberation Mono',monospace;transform:scaleY(1.15);transform-origin:0 13.06px;">EDI</div>
<div class="t" style="left:329.79px;top:110.24px;font-size:11.5px;line-height:20px;letter-spacing:0.028px;color:#000;font-family:'Liberation Mono',monospace;transform:scaleY(1.15);transform-origin:0 13.06px;">,</div>
<div class="t" style="left:336.72px;top:110.24px;font-size:11.5px;line-height:20px;letter-spacing:0.028px;color:#808000;font-family:'Liberation Mono',monospace;transform:scaleY(1.15);transform-origin:0 13.06px;">EDI</div>
<div class="t" style="left:56.00px;top:126.24px;font-size:11.5px;line-height:20px;letter-spacing:0.028px;color:#000;font-family:'Liberation Mono',monospace;transform:scaleY(1.15);transform-origin:0 13.06px;">00400ad8</div>
<div class="t" style="left:119.50px;top:126.24px;font-size:11.5px;line-height:20px;letter-spacing:0.028px;color:#0000ee;font-family:'Liberation Mono',monospace;transform:scaleY(1.15);transform-origin:0 13.06px;">e8 53 ff</div>
<div class="t" style="left:229.00px;top:126.24px;font-size:11.5px;line-height:20px;letter-spacing:0.028px;color:#000080;font-family:'Liberation Mono',monospace;transform:scaleY(1.15);transform-origin:0 13.06px;">CALL</div>
<div class="t" style="left:309.00px;top:126.24px;font-size:11.5px;line-height:20px;letter-spacing:0.028px;color:#0000ee;font-family:'Liberation Mono',monospace;transform:scaleY(1.15);transform-origin:0 13.06px;">&lt;EXTERNAL&gt;::time</div>
<div class="t" style="left:649.00px;top:126.24px;font-size:11.5px;line-height:20px;letter-spacing:0.028px;color:#bdbdbd;font-family:'Liberation Mono',monospace;transform:scaleY(1.15);transform-origin:0 13.06px;">time_t time(time_t * __time</div>
<div class="t" style="left:119.50px;top:142.24px;font-size:11.5px;line-height:20px;letter-spacing:0.028px;color:#0000ee;font-family:'Liberation Mono',monospace;transform:scaleY(1.15);transform-origin:0 13.06px;">ff ff</div>
<div class="t" style="left:56.00px;top:158.24px;font-size:11.5px;line-height:20px;letter-spacing:0.028px;color:#000;font-family:'Liberation Mono',monospace;transform:scaleY(1.15);transform-origin:0 13.06px;">00400add</div>
<div class="t" style="left:119.50px;top:158.24px;font-size:11.5px;line-height:20px;letter-spacing:0.028px;color:#0000ee;font-family:'Liberation Mono',monospace;transform:scaleY(1.15);transform-origin:0 13.06px;">0f b7 f8</div>
<div class="t" style="left:229.00px;top:158.24px;font-size:11.5px;line-height:20px;letter-spacing:0.028px;color:#000080;font-family:'Liberation Mono',monospace;transform:scaleY(1.15);transform-origin:0 13.06px;">MOVZX</div>
<div class="t" style="left:309.00px;top:158.24px;font-size:11.5px;line-height:20px;letter-spacing:0.028px;color:#808000;font-family:'Liberation Mono',monospace;transform:scaleY(1.15);transform-origin:0 13.06px;">EDI</div>
<div class="t" style="left:329.79px;top:158.24px;font-size:11.5px;line-height:20px;letter-spacing:0.028px;color:#000;font-family:'Liberation Mono',monospace;transform:scaleY(1.15);transform-origin:0 13.06px;">,</div>
<div class="t" style="left:336.72px;top:158.24px;font-size:11.5px;line-height:20px;letter-spacing:0.028px;color:#808000;font-family:'Liberation Mono',monospace;transform:scaleY(1.15);transform-origin:0 13.06px;">AX</div>
<div class="t" style="left:56.00px;top:174.24px;font-size:11.5px;line-height:20px;letter-spacing:0.028px;color:#000;font-family:'Liberation Mono',monospace;transform:scaleY(1.15);transform-origin:0 13.06px;">00400ae0</div>
<div class="t" style="left:119.50px;top:174.24px;font-size:11.5px;line-height:20px;letter-spacing:0.028px;color:#0000ee;font-family:'Liberation Mono',monospace;transform:scaleY(1.15);transform-origin:0 13.06px;">81 cf 00</div>
<div class="t" style="left:229.00px;top:174.24px;font-size:11.5px;line-height:20px;letter-spacing:0.028px;color:#000080;font-family:'Liberation Mono',monospace;transform:scaleY(1.15);transform-origin:0 13.06px;">OR</div>
<div class="t" style="left:309.00px;top:174.24px;font-size:11.5px;line-height:20px;letter-spacing:0.028px;color:#808000;font-family:'Liberation Mono',monospace;transform:scaleY(1.15);transform-origin:0 13.06px;">EDI</div>
<div class="t" style="left:329.79px;top:174.24px;font-size:11.5px;line-height:20px;letter-spacing:0.028px;color:#000;font-family:'Liberation Mono',monospace;transform:scaleY(1.15);transform-origin:0 13.06px;">,</div>
<div class="t" style="left:336.72px;top:174.24px;font-size:11.5px;line-height:20px;letter-spacing:0.028px;color:#008000;font-family:'Liberation Mono',monospace;transform:scaleY(1.15);transform-origin:0 13.06px;">0x5eed0000</div>
<div class="t" style="left:119.50px;top:190.24px;font-size:11.5px;line-height:20px;letter-spacing:0.028px;color:#0000ee;font-family:'Liberation Mono',monospace;transform:scaleY(1.15);transform-origin:0 13.06px;">00 ed 5e</div>
<div class="t" style="left:56.00px;top:206.24px;font-size:11.5px;line-height:20px;letter-spacing:0.028px;color:#000;font-family:'Liberation Mono',monospace;transform:scaleY(1.15);transform-origin:0 13.06px;">00400ae6</div>
<div class="t" style="left:119.50px;top:206.24px;font-size:11.5px;line-height:20px;letter-spacing:0.028px;color:#0000ee;font-family:'Liberation Mono',monospace;transform:scaleY(1.15);transform-origin:0 13.06px;">e8 25 ff</div>
<div class="t" style="left:229.00px;top:206.24px;font-size:11.5px;line-height:20px;letter-spacing:0.028px;color:#000080;font-family:'Liberation Mono',monospace;transform:scaleY(1.15);transform-origin:0 13.06px;">CALL</div>
<div class="t" style="left:309.00px;top:206.24px;font-size:11.5px;line-height:20px;letter-spacing:0.028px;color:#0000ee;font-family:'Liberation Mono',monospace;transform:scaleY(1.15);transform-origin:0 13.06px;">&lt;EXTERNAL&gt;::srand</div>
<div class="t" style="left:649.00px;top:206.24px;font-size:11.5px;line-height:20px;letter-spacing:0.028px;color:#bdbdbd;font-family:'Liberation Mono',monospace;transform:scaleY(1.15);transform-origin:0 13.06px;">void srand(uint __seed)</div>
<div class="t" style="left:119.50px;top:222.24px;font-size:11.5px;line-height:20px;letter-spacing:0.028px;color:#0000ee;font-family:'Liberation Mono',monospace;transform:scaleY(1.15);transform-origin:0 13.06px;">ff ff</div>
<div class="t" style="left:56.00px;top:238.24px;font-size:11.5px;line-height:20px;letter-spacing:0.028px;color:#000;font-family:'Liberation Mono',monospace;transform:scaleY(1.15);transform-origin:0 13.06px;">00400aeb</div>
<div class="t" style="left:119.50px;top:238.24px;font-size:11.5px;line-height:20px;letter-spacing:0.028px;color:#0000ee;font-family:'Liberation Mono',monospace;transform:scaleY(1.15);transform-origin:0 13.06px;">31 c0</div>
<div class="t" style="left:229.00px;top:238.24px;font-size:11.5px;line-height:20px;letter-spacing:0.028px;color:#000080;font-family:'Liberation Mono',monospace;transform:scaleY(1.15);transform-origin:0 13.06px;">XOR</div>
<div class="t" style="left:309.00px;top:238.24px;font-size:11.5px;line-height:20px;letter-spacing:0.028px;color:#808000;font-family:'Liberation Mono',monospace;transform:scaleY(1.15);transform-origin:0 13.06px;">EAX</div>
<div class="t" style="left:329.79px;top:238.24px;font-size:11.5px;line-height:20px;letter-spacing:0.028px;color:#000;font-family:'Liberation Mono',monospace;transform:scaleY(1.15);transform-origin:0 13.06px;">,</div>
<div class="t" style="left:336.72px;top:238.24px;font-size:11.5px;line-height:20px;letter-spacing:0.028px;color:#808000;font-family:'Liberation Mono',monospace;transform:scaleY(1.15);transform-origin:0 13.06px;">EAX</div>
<div class="t" style="left:56.00px;top:254.24px;font-size:11.5px;line-height:20px;letter-spacing:0.028px;color:#000;font-family:'Liberation Mono',monospace;transform:scaleY(1.15);transform-origin:0 13.06px;">00400aed</div>
<div class="t" style="left:119.50px;top:254.24px;font-size:11.5px;line-height:20px;letter-spacing:0.028px;color:#0000ee;font-family:'Liberation Mono',monospace;transform:scaleY(1.15);transform-origin:0 13.06px;">e8 7e 07</div>
<div class="t" style="left:229.00px;top:254.24px;font-size:11.5px;line-height:20px;letter-spacing:0.028px;color:#000080;font-family:'Liberation Mono',monospace;transform:scaleY(1.15);transform-origin:0 13.06px;">CALL</div>
<div class="t" style="left:309.00px;top:254.24px;font-size:11.5px;line-height:20px;letter-spacing:0.028px;color:#0000ee;font-family:'Liberation Mono',monospace;transform:scaleY(1.15);transform-origin:0 13.06px;">FUN_00401270</div>
<div class="t" style="left:649.00px;top:254.24px;font-size:11.5px;line-height:20px;letter-spacing:0.028px;color:#bdbdbd;font-family:'Liberation Mono',monospace;transform:scaleY(1.15);transform-origin:0 13.06px;">undefined FUN_00401270()</div>
<div class="t" style="left:119.50px;top:270.24px;font-size:11.5px;line-height:20px;letter-spacing:0.028px;color:#0000ee;font-family:'Liberation Mono',monospace;transform:scaleY(1.15);transform-origin:0 13.06px;">00 00</div>
<div class="t" style="left:56.00px;top:286.24px;font-size:11.5px;line-height:20px;letter-spacing:0.028px;color:#000;font-family:'Liberation Mono',monospace;transform:scaleY(1.15);transform-origin:0 13.06px;">00400af2</div>
<div class="t" style="left:119.50px;top:286.24px;font-size:11.5px;line-height:20px;letter-spacing:0.028px;color:#0000ee;font-family:'Liberation Mono',monospace;transform:scaleY(1.15);transform-origin:0 13.06px;">e8 e9 fe</div>
<div class="t" style="left:229.00px;top:286.24px;font-size:11.5px;line-height:20px;letter-spacing:0.028px;color:#000080;font-family:'Liberation Mono',monospace;transform:scaleY(1.15);transform-origin:0 13.06px;">CALL</div>
<div class="t" style="left:309.00px;top:286.24px;font-size:11.5px;line-height:20px;letter-spacing:0.028px;color:#0000ee;font-family:'Liberation Mono',monospace;transform:scaleY(1.15);transform-origin:0 13.06px;">&lt;EXTERNAL&gt;::initscr</div>
<div class="t" style="left:649.00px;top:286.24px;font-size:11.5px;line-height:20px;letter-spacing:0.028px;color:#bdbdbd;font-family:'Liberation Mono',monospace;transform:scaleY(1.15);transform-origin:0 13.06px;">undefined initscr()</div>
<div class="t" style="left:119.50px;top:302.24px;font-size:11.5px;line-height:20px;letter-spacing:0.028px;color:#0000ee;font-family:'Liberation Mono',monospace;transform:scaleY(1.15);transform-origin:0 13.06px;">ff ff</div>
</div>
<div style="left:637px;top:547px;width:2px;height:12px;background:#f4a6b8;"></div>
<div style="left:1420px;top:482px;width:16px;height:316px;background:linear-gradient(to right,#c6c9cf,#e6e8eb 45%,#eef0f2);"></div>
<div style="left:1420px;top:556px;width:15px;height:226px;background:linear-gradient(to right,#8e939b,#b9bdc4 30%,#cfd2d7 70%,#d8dadf);border-radius:0 0 10px 0;"></div>
<div style="left:1420px;top:498px;width:15px;height:28px;background:linear-gradient(to right,#8e939b,#b9bdc4 30%,#cfd2d7 70%,#d8dadf);border-radius:0 10px 0 0;"></div>
<div style="left:1421px;top:483px;width:13px;height:15px;background:linear-gradient(to right,#dfe1e5,#f4f5f7);"></div>
<svg style="left:1420px;top:485px;" width="16" height="10" viewBox="0 0 16 10"><path d="M4.0 8 L8.0 1 L12.0 8 Z" fill="#333"/></svg>
<div style="left:1421px;top:782px;width:13px;height:15px;background:linear-gradient(to right,#dfe1e5,#f4f5f7);"></div>
<svg style="left:1420px;top:784px;" width="16" height="10" viewBox="0 0 16 10"><path d="M4.0 1 L8.0 8 L12.0 1 Z" fill="#333"/></svg>
<div style="left:1419px;top:526px;width:16px;height:30px;box-sizing:border-box;border:1px solid #3d5a78;border-radius:0 9px 9px 0;border-left:none;background:linear-gradient(to right,#a8c1da,#d9e6f2 55%,#f0f5fa);"></div>
<div style="left:1436px;top:482px;width:16px;height:316px;background:#d6d9df;"></div>
<div style="left:1436px;top:533px;width:9px;height:3px;box-sizing:border-box;border:1px solid #f08c00;background:#fff;"></div>
<div style="left:1435px;top:666px;width:10px;height:4px;background:#f0a040;border:1px solid #e07800;box-sizing:border-box;"></div>
<div style="left:1435px;top:757px;width:10px;height:8px;background:#f2c96a;border:1px solid #e07800;box-sizing:border-box;"></div>
<div style="left:580px;top:798px;width:840px;height:16px;background:linear-gradient(#c6c9cf,#e6e8eb 45%,#eef0f2);"></div>
<div style="left:1248px;top:798px;width:156px;height:15px;background:linear-gradient(#8e939b,#b9bdc4 30%,#cfd2d7 70%,#d8dadf);border-radius:0 0 10px 0;"></div>
<div style="left:581px;top:799px;width:15px;height:14px;background:linear-gradient(#dfe1e5,#f4f5f7);"></div>
<svg style="left:583px;top:798px;" width="10" height="16" viewBox="0 0 10 16"><path d="M8 4.0 L1 8.0 L8 12.0 Z" fill="#333"/></svg>
<div style="left:1404px;top:799px;width:15px;height:14px;background:linear-gradient(#dfe1e5,#f4f5f7);"></div>
<svg style="left:1407px;top:798px;" width="10" height="16" viewBox="0 0 10 16"><path d="M1 4.0 L8 8.0 L1 12.0 Z" fill="#333"/></svg>
<div style="left:597px;top:798px;width:651px;height:15px;box-sizing:border-box;border:1px solid #3d5a78;border-top:none;border-radius:0 0 12px 12px;background:linear-gradient(#f0f5fa,#d9e6f2 45%,#a8c1da);"></div>
<div style="left:1420px;top:798px;width:32px;height:16px;background:#d6d9df;"></div>
<div style="left:1455px;top:77px;width:1px;height:743px;background:#5d6168;"></div>
<div style="left:1456px;top:77px;width:4px;height:743px;background:#d6d9df;"></div>
<div style="left:1460px;top:77px;width:457px;height:712px;box-sizing:border-box;border:1px solid #8f939a;"></div>
<div style="left:1461px;top:78px;width:455px;height:22px;background:linear-gradient(to right,#39698a 0%,#39698a 24%,#5e86a3 40%,#d6d9df 78%,#d6d9df 100%);box-shadow:inset 1px 1px 0 rgba(255,255,255,.3);"></div>
<svg style="left:1465px;top:81px;" width="15" height="14" viewBox="0 0 15 14"><rect x="1" y="1" width="13" height="12" fill="#fff" stroke="#1f4fa8" stroke-width="2"/><path d="M3.5 4.5 L6 7 L3.5 9.5" stroke="#555" stroke-width="0.9" fill="none"/></svg>
<div class="t" style="left:1483.00px;top:80.27px;font-size:13.65px;line-height:20px;letter-spacing:0.052px;color:#fff;">Interpreter - GNU gdb (GDB) Red Hat Enterprise Linux...</div>
<svg style="left:1832px;top:81px;" width="17" height="17" viewBox="0 0 17 17"><path d="M1.5 15.5 L8 9" stroke="#666" stroke-width="1.6"/><path d="M7 5 L12 10 L15 3 L14 2 Z" fill="#1ea01e"/><path d="M10 1 L16 7" stroke="#1ea01e" stroke-width="2.6"/></svg>
<svg style="left:1855px;top:82px;" width="12" height="14" viewBox="0 0 12 14"><rect x="1" y="2" width="3.5" height="11" fill="#d9a300"/><rect x="7.5" y="2" width="3.5" height="11" fill="#d9a300"/></svg>
<svg style="left:1874px;top:81px;" width="17" height="17" viewBox="0 0 17 17"><path d="M3 12 L12 1.5 L16 4.5 L7 15 Z" fill="#f2c230" stroke="#a07800" stroke-width="0.8"/><path d="M3 12 L7 15 L4 16 A2 2 0 0 1 2 14 Z" fill="#f0a0a0"/><path d="M9 15 H16" stroke="#e08080" stroke-width="0.8"/></svg>
<div style="left:1896px;top:81px;width:1px;height:16px;background:#9a9ea5;"></div>
<svg style="left:1901px;top:83px;" width="12" height="12" viewBox="0 0 12 12"><path d="M1.5 1.5 L10.5 10.5 M10.5 1.5 L1.5 10.5" stroke="#000" stroke-width="2.4"/></svg>
<div style="left:1461px;top:100px;width:455px;height:688px;background:#fff;"></div>
<div class="t" style="left:1466.50px;top:102.94px;font-size:11.5px;line-height:20px;letter-spacing:0.078px;color:#000;font-family:'Liberation Mono',monospace;transform:scaleY(1.15);transform-origin:0 13.06px;">(gdb)</div>
<div class="t" style="left:1466.50px;top:117.94px;font-size:11.5px;line-height:20px;letter-spacing:0.078px;color:#000;font-family:'Liberation Mono',monospace;transform:scaleY(1.15);transform-origin:0 13.06px;">Temporary breakpoint 1, 0x0000000000400ad0 in main ()</div>
<div class="t" style="left:1468.00px;top:768.94px;font-size:11.5px;line-height:20px;letter-spacing:0.078px;color:#000;font-family:'Liberation Mono',monospace;transform:scaleY(1.15);transform-origin:0 13.06px;">(gdb)</div>
<div style="left:1460px;top:789px;width:66px;height:1px;background:#2b4a66;"></div>
<div style="left:1460px;top:793px;width:129px;height:23px;box-sizing:border-box;background:linear-gradient(#fbfbfc,#eceef1 55%,#dcdfe4);border:1px solid #6f7d8e;border-top:none;border-radius:0 0 7px 7px;"></div>
<svg style="left:1467px;top:797px;" width="16" height="16" viewBox="0 0 16 16"><circle cx="8" cy="8" r="7" fill="#0a64b4"/><path d="M3 3 L13 13" stroke="#fff" stroke-width="2.4"/></svg>
<div class="t" style="left:1488.00px;top:794.45px;font-size:13.12px;line-height:20px;letter-spacing:0.467px;color:#000;">Breakpoints</div>
<div class="t" style="left:1570.00px;top:793.13px;font-size:14.04px;line-height:20px;letter-spacing:2.693px;color:#000;font-weight:bold;">×</div>
<div style="left:1590px;top:793px;width:124px;height:23px;box-sizing:border-box;background:linear-gradient(#9db6cf,#b3c8dc 45%,#dfe8f1);border:1px solid #2f4760;border-top:none;border-radius:0 0 7px 7px;"></div>
<svg style="left:1598px;top:797px;" width="15" height="14" viewBox="0 0 15 14"><rect x="1" y="1" width="13" height="12" fill="#fff" stroke="#1f4fa8" stroke-width="2"/><path d="M3.5 4.5 L6 7 L3.5 9.5" stroke="#555" stroke-width="0.9" fill="none"/></svg>
<div class="t" style="left:1618.00px;top:794.45px;font-size:13.12px;line-height:20px;letter-spacing:0.640px;color:#000;">Interpreter</div>
<div class="t" style="left:1694.00px;top:793.13px;font-size:14.04px;line-height:20px;letter-spacing:2.693px;color:#000;font-weight:bold;">×</div>
<svg style="left:1891px;top:793px;" width="8" height="10" viewBox="0 0 8 10"><path d="M7 1 L1 5 L7 9 Z" fill="#000"/></svg>
<svg style="left:1906px;top:793px;" width="8" height="10" viewBox="0 0 8 10"><path d="M1 1 L7 5 L1 9 Z" fill="#aaa"/></svg>
<div style="left:1917px;top:26px;width:3px;height:1050px;background:#d6d9df;"></div>
<div style="left:0px;top:820px;width:1920px;height:3px;background:#d6d9df;"></div>
<div style="left:3px;top:823px;width:664px;height:24px;box-sizing:border-box;border:1px solid #8f939a;"></div>
<div style="left:4px;top:824px;width:662px;height:22px;background:linear-gradient(to right,#a8a8a8 0%,#a8a8a8 62%,#d6d9df 98%,#d6d9df 100%);box-shadow:inset 1px 1px 0 rgba(255,255,255,.3);"></div>
<svg style="left:5px;top:828px;" width="15" height="14" viewBox="0 0 15 14"><rect x="0" y="0" width="15" height="3" fill="#109010"/><rect x="0" y="5" width="15" height="3" fill="#666"/><rect x="0" y="10" width="15" height="3" fill="#666"/></svg>
<div class="t" style="left:24.00px;top:826.27px;font-size:13.65px;line-height:20px;letter-spacing:0.311px;color:#000;">Stack - [1.1:9099] termmines stopped at 0x0x0000000000400ad0 in main</div>
<svg style="left:649px;top:829px;" width="12" height="12" viewBox="0 0 12 12"><path d="M1.5 1.5 L10.5 10.5 M10.5 1.5 L1.5 10.5" stroke="#000" stroke-width="2.4"/></svg>
<div style="left:3px;top:848px;width:664px;height:136px;box-sizing:border-box;border:1px solid #8f939a;background:#d6d9df;"></div>
<div style="left:4px;top:849px;width:660px;height:21px;box-sizing:border-box;background:linear-gradient(#fafbfc,#eef0f3 45%,#dcdfe4 55%,#eceef1);border-bottom:1px solid #8f939a;"></div>
<div style="left:23px;top:850px;width:1px;height:19px;background:#a8acb3;"></div>
<div style="left:236px;top:850px;width:1px;height:19px;background:#a8acb3;"></div>
<div style="left:450px;top:850px;width:1px;height:19px;background:#a8acb3;"></div>
<div class="t" style="left:8.00px;top:850.00px;font-size:11.55px;line-height:20px;letter-spacing:0.287px;color:#000;">...</div>
<div class="t" style="left:28.00px;top:850.45px;font-size:13.12px;line-height:20px;letter-spacing:-0.980px;color:#000;">PC</div>
<div class="t" style="left:241.00px;top:850.45px;font-size:13.12px;line-height:20px;letter-spacing:0.356px;color:#000;">Function</div>
<div class="t" style="left:455.00px;top:850.45px;font-size:13.12px;line-height:20px;letter-spacing:0.625px;color:#000;">Comment</div>
<div style="left:4px;top:871px;width:660px;height:18px;background:#39698a;"></div>
<div class="t" style="left:10.00px;top:870.51px;font-size:12.96px;line-height:20px;letter-spacing:1.142px;color:#fff;font-weight:bold;">0</div>
<div class="t" style="left:28.00px;top:870.51px;font-size:12.96px;line-height:20px;letter-spacing:0.954px;color:#fff;font-weight:bold;">00400ad0</div>
<div class="t" style="left:241.00px;top:870.51px;font-size:12.96px;line-height:20px;letter-spacing:0.753px;color:#fff;font-weight:bold;">main</div>
<div style="left:664px;top:849px;width:2px;height:134px;background:#d6d9df;"></div>
<div style="left:3px;top:984px;width:664px;height:35px;box-sizing:border-box;border:1px solid #8f939a;border-bottom-color:#6f737a;"></div>
<div style="left:55px;top:990px;width:584px;height:23px;box-sizing:border-box;background:#fff;border:1px solid #b0b4ba;border-top-color:#8f939a;"></div>
<div class="t" style="left:7.00px;top:991.63px;font-size:12.6px;line-height:20px;letter-spacing:0.293px;color:#111;">Filter:</div>
<svg style="left:644px;top:993px;" width="17" height="17" viewBox="0 0 17 17"><path d="M3.6 0.6 H11.5 L15.4 4.5 V15.4 H3.6 Z" fill="#fff" stroke="#3a78d0" stroke-width="1.2" stroke-linejoin="round"/><rect x="5" y="2" width="9" height="9" fill="#cfe2f8"/><path d="M6.5 4 L2.2 7.8 L6.5 11.6 M8.8 4 L13 7.8 L8.8 11.6" stroke="#4a98e8" stroke-width="2" fill="none"/><rect x="5" y="11.6" width="9.5" height="2" fill="#5ab4f5"/></svg>
<div style="left:1px;top:1019px;width:668px;height:1px;background:#2b4a66;"></div>
<div style="left:1px;top:1020px;width:668px;height:1px;background:#a9c3da;"></div>
<div style="left:12px;top:1023px;width:106px;height:23px;box-sizing:border-box;background:linear-gradient(#fbfbfc,#eceef1 55%,#dcdfe4);border:1px solid #6f7d8e;border-top:none;border-radius:0 0 7px 7px;"></div>
<svg style="left:20px;top:1027px;" width="16" height="16" viewBox="0 0 16 16"><rect x="0.5" y="0.5" width="15" height="14" rx="1.5" fill="#000"/><rect x="2" y="2" width="12" height="9" fill="#18d018"/><path d="M2 4 H14 M2 6.5 H14 M2 9 H14" stroke="#fff" stroke-width="0.8"/><rect x="4" y="1.5" width="3" height="9.5" fill="#333"/><rect x="9" y="1.5" width="3" height="9.5" fill="#333"/><path d="M2 13 H14" stroke="#fff" stroke-dasharray="1 1"/></svg>
<div class="t" style="left:40.00px;top:1024.45px;font-size:13.12px;line-height:20px;letter-spacing:0.168px;color:#000;">Regions</div>
<div class="t" style="left:98.00px;top:1023.13px;font-size:14.04px;line-height:20px;letter-spacing:2.693px;color:#000;font-weight:bold;">×</div>
<div style="left:118px;top:1023px;width:90px;height:23px;box-sizing:border-box;background:linear-gradient(#9db6cf,#b3c8dc 45%,#dfe8f1);border:1px solid #2f4760;border-top:none;border-radius:0 0 7px 7px;"></div>
<svg style="left:126px;top:1027px;" width="15" height="14" viewBox="0 0 15 14"><rect x="0" y="1" width="15" height="2" fill="#109010"/><rect x="0" y="6" width="15" height="2" fill="#666"/><rect x="0" y="11" width="15" height="2" fill="#666"/></svg>
<div class="t" style="left:146.00px;top:1024.45px;font-size:13.12px;line-height:20px;letter-spacing:0.359px;color:#000;">Stack</div>
<div class="t" style="left:188.00px;top:1023.13px;font-size:14.04px;line-height:20px;letter-spacing:2.693px;color:#000;font-weight:bold;">×</div>
<div style="left:208px;top:1023px;width:107px;height:23px;box-sizing:border-box;background:linear-gradient(#fbfbfc,#eceef1 55%,#dcdfe4);border:1px solid #6f7d8e;border-top:none;border-radius:0 0 7px 7px;"></div>
<svg style="left:216px;top:1027px;" width="16" height="16" viewBox="0 0 16 16"><rect x="1" y="1" width="14" height="10" fill="#7aa7e0" stroke="#777"/><rect x="3" y="3" width="10" height="6" fill="#bcd6f5"/><path d="M5 13 H11 M3 15 H13" stroke="#888" stroke-width="1.5"/></svg>
<div class="t" style="left:236.00px;top:1024.45px;font-size:13.12px;line-height:20px;letter-spacing:0.213px;color:#000;">Console</div>
<div class="t" style="left:295.00px;top:1023.13px;font-size:14.04px;line-height:20px;letter-spacing:2.693px;color:#000;font-weight:bold;">×</div>
<div style="left:315px;top:1023px;width:109px;height:23px;box-sizing:border-box;background:linear-gradient(#fbfbfc,#eceef1 55%,#dcdfe4);border:1px solid #6f7d8e;border-top:none;border-radius:0 0 7px 7px;"></div>
<svg style="left:323px;top:1027px;" width="16" height="16" viewBox="0 0 16 16"><path d="M2 1 L14 8 L2 15 L5 8 Z" fill="none" stroke="#222" stroke-width="2"/></svg>
<div class="t" style="left:343.00px;top:1024.45px;font-size:13.12px;line-height:20px;letter-spacing:0.367px;color:#000;">Watches</div>
<div class="t" style="left:404.00px;top:1023.13px;font-size:14.04px;line-height:20px;letter-spacing:2.693px;color:#000;font-weight:bold;">×</div>
<div style="left:671px;top:823px;width:1246px;height:24px;box-sizing:border-box;border:1px solid #8f939a;"></div>
<div style="left:672px;top:824px;width:1244px;height:22px;background:linear-gradient(to right,#a8a8a8 0%,#a8a8a8 50%,#d6d9df 100%);box-shadow:inset 1px 1px 0 rgba(255,255,255,.3);"></div>
<svg style="left:675px;top:827px;" width="16" height="16" viewBox="0 0 16 16"><g transform="rotate(40 7.5 9)"><ellipse cx="7.5" cy="9.5" rx="4" ry="6" fill="#2f5fb3"/><path d="M3.5 6 L1 4.5 M3.5 9.5 L0.5 9.5 M3.5 12.5 L1 14.5 M11.5 6 L14 4.5 M11.5 9.5 L14.5 9.5 M11.5 12.5 L14 14.5 M6 3.5 L5 1 M9 3.5 L10 1" stroke="#2f5fb3" stroke-width="1.3"/><path d="M7.5 6 V14" stroke="#8fb0e0" stroke-width="0.7"/></g><path d="M11.5 1 L15.5 2.5 L13 5.5 Z" fill="#14a014"/></svg>
<div class="t" style="left:694.00px;top:826.27px;font-size:13.65px;line-height:20px;letter-spacing:0.019px;color:#000;">Threads - 1</div>
<svg style="left:1877px;top:831px;" width="11" height="7" viewBox="0 0 11 7"><path d="M0 0 H11 L5.5 6.050000000000001 Z" fill="#8a8a8a"/></svg>
<svg style="left:1900px;top:829px;" width="12" height="12" viewBox="0 0 12 12"><path d="M1.5 1.5 L10.5 10.5 M10.5 1.5 L1.5 10.5" stroke="#8a8a8a" stroke-width="2.4"/></svg>
<div style="left:671px;top:848px;width:408px;height:19px;box-sizing:border-box;background:#39698a;border:1px solid #1f3f5a;border-top-color:#6ec0ff;border-left-color:#6ec0ff;"></div>
<svg style="left:675px;top:850px;" width="15" height="15" viewBox="0 0 15 15"><circle cx="7.5" cy="7.5" r="6.3" fill="#ee1c1c" stroke="#fff" stroke-width="1.6"/></svg>
<div class="t" style="left:693.00px;top:847.45px;font-size:13.12px;line-height:20px;letter-spacing:0.379px;color:#fff;">1 - process 9099 - _tmp_termmines 2023.04.17-14.24.19-EDT</div>
<div style="left:671px;top:869px;width:1246px;height:114px;box-sizing:border-box;border:1px solid #8f939a;background:#d6d9df;"></div>
<div style="left:673px;top:870px;width:1243px;height:20px;box-sizing:border-box;background:linear-gradient(#fafbfc,#eef0f3 45%,#dcdfe4 55%,#eceef1);border-bottom:1px solid #8f939a;"></div>
<div style="left:905px;top:871px;width:1px;height:18px;background:#a8acb3;"></div>
<div style="left:1053px;top:871px;width:1px;height:18px;background:#a8acb3;"></div>
<div style="left:1199px;top:871px;width:1px;height:18px;background:#a8acb3;"></div>
<div style="left:1351px;top:871px;width:1px;height:18px;background:#a8acb3;"></div>
<div style="left:1583px;top:871px;width:1px;height:18px;background:#a8acb3;"></div>
<div class="t" style="left:679.00px;top:870.45px;font-size:13.12px;line-height:20px;letter-spacing:0.471px;color:#000;">Name</div>
<svg style="left:878px;top:875px;" width="14" height="13" viewBox="0 0 14 13"><path d="M1 1 H10 M1 4 H8 M1 7 H6 M1 10 H4" stroke="#444" stroke-width="1"/><path d="M1 1 V12 L10 1" stroke="#444" fill="none"/></svg>
<div class="t" style="left:911.00px;top:870.45px;font-size:13.12px;line-height:20px;letter-spacing:0.400px;color:#000;">Created</div>
<div class="t" style="left:1058.00px;top:870.45px;font-size:13.12px;line-height:20px;letter-spacing:0.497px;color:#000;">Destroyed</div>
<div class="t" style="left:1206.00px;top:870.45px;font-size:13.12px;line-height:20px;letter-spacing:0.491px;color:#000;">State</div>
<div class="t" style="left:1357.00px;top:870.45px;font-size:13.12px;line-height:20px;letter-spacing:0.625px;color:#000;">Comment</div>
<div class="t" style="left:1590.00px;top:870.45px;font-size:13.12px;line-height:20px;letter-spacing:0.238px;color:#000;">Plot</div>
<svg style="left:1740px;top:880px;" width="20" height="10" viewBox="0 0 20 10"><path d="M0 0 H20 L10 10 Z" fill="#000"/></svg>
<div style="left:673px;top:891px;width:910px;height:18px;background:#39698a;"></div>
<div style="left:1583px;top:891px;width:333px;height:18px;box-sizing:border-box;background:#fff;border-top:1px solid #39698a;border-bottom:1px solid #39698a;"></div>
<div class="t" style="left:679.00px;top:890.51px;font-size:12.96px;line-height:20px;letter-spacing:1.106px;color:#fff;font-weight:bold;">[1.1:9099] termmines stoppe...</div>
<div class="t" style="left:1041.00px;top:890.51px;font-size:12.96px;line-height:20px;letter-spacing:1.142px;color:#fff;font-weight:bold;">0</div>
<div class="t" style="left:1206.00px;top:890.51px;font-size:12.96px;line-height:20px;letter-spacing:0.143px;color:#fff;font-weight:bold;">ALIVE</div>
<div style="left:671px;top:984px;width:1246px;height:35px;box-sizing:border-box;border:1px solid #8f939a;border-bottom-color:#6f737a;"></div>
<div style="left:725px;top:990px;width:1166px;height:23px;box-sizing:border-box;background:#fff;border:1px solid #b0b4ba;border-top-color:#8f939a;"></div>
<div class="t" style="left:677.00px;top:991.63px;font-size:12.6px;line-height:20px;letter-spacing:0.293px;color:#111;">Filter:</div>
<svg style="left:1897px;top:993px;" width="17" height="17" viewBox="0 0 17 17"><path d="M3.6 0.6 H11.5 L15.4 4.5 V15.4 H3.6 Z" fill="#fff" stroke="#3a78d0" stroke-width="1.2" stroke-linejoin="round"/><rect x="5" y="2" width="9" height="9" fill="#cfe2f8"/><path d="M6.5 4 L2.2 7.8 L6.5 11.6 M8.8 4 L13 7.8 L8.8 11.6" stroke="#4a98e8" stroke-width="2" fill="none"/><rect x="5" y="11.6" width="9.5" height="2" fill="#5ab4f5"/></svg>
<div style="left:669px;top:1019px;width:1251px;height:1px;background:#2b4a66;"></div>
<div style="left:669px;top:1020px;width:1251px;height:1px;background:#a9c3da;"></div>
<div style="left:682px;top:1023px;width:106px;height:23px;box-sizing:border-box;background:linear-gradient(#9db6cf,#b3c8dc 45%,#dfe8f1);border:1px solid #2f4760;border-top:none;border-radius:0 0 7px 7px;"></div>
<svg style="left:689px;top:1026px;" width="16" height="16" viewBox="0 0 16 16"><g transform="rotate(40 7.5 9)"><ellipse cx="7.5" cy="9.5" rx="4" ry="6" fill="#2f5fb3"/><path d="M3.5 6 L1 4.5 M3.5 9.5 L0.5 9.5 M3.5 12.5 L1 14.5 M11.5 6 L14 4.5 M11.5 9.5 L14.5 9.5 M11.5 12.5 L14 14.5 M6 3.5 L5 1 M9 3.5 L10 1" stroke="#2f5fb3" stroke-width="1.3"/><path d="M7.5 6 V14" stroke="#8fb0e0" stroke-width="0.7"/></g><path d="M11.5 1 L15.5 2.5 L13 5.5 Z" fill="#14a014"/></svg>
<div class="t" style="left:710.00px;top:1024.45px;font-size:13.12px;line-height:20px;letter-spacing:0.299px;color:#000;">Threads</div>
<div class="t" style="left:767.00px;top:1023.13px;font-size:14.04px;line-height:20px;letter-spacing:2.693px;color:#000;font-weight:bold;">×</div>
<div style="left:788px;top:1023px;width:85px;height:23px;box-sizing:border-box;background:linear-gradient(#fbfbfc,#eceef1 55%,#dcdfe4);border:1px solid #6f7d8e;border-top:none;border-radius:0 0 7px 7px;"></div>
<svg style="left:796px;top:1027px;" width="16" height="16" viewBox="0 0 16 16"><circle cx="8" cy="8" r="6.5" fill="#fff" stroke="#d9a300" stroke-width="1.8"/><path d="M8 4 V8 L10.5 9.5" stroke="#4a7ab0" stroke-width="1.2" fill="none"/></svg>
<div class="t" style="left:817.00px;top:1024.45px;font-size:13.12px;line-height:20px;letter-spacing:0.481px;color:#000;">Time</div>
<div class="t" style="left:851.00px;top:1023.13px;font-size:14.04px;line-height:20px;letter-spacing:2.693px;color:#000;font-weight:bold;">×</div>
<div style="left:668px;top:823px;width:3px;height:200px;background:#d6d9df;"></div>
<div style="left:1px;top:1048px;width:1919px;height:29px;background:#d6d9df;"></div>
<svg style="left:3px;top:1055px;" width="18" height="18" viewBox="0 0 18 18"><circle cx="9" cy="9" r="7.6" fill="#fff" stroke="#333" stroke-width="1.1"/><path d="M5 11.5 C6 9 8 7.5 10 6 L12.5 4.2 C14 5.5 15 8 14.5 11 L13.5 13 C12.5 11 11 10 10.5 12 L10 14 L8.5 13.5 L10 10.5 C9 10 7.5 11 6.5 12.5 Z" fill="#e02010"/></svg>
<div style="left:23px;top:1052px;width:1410px;height:25px;box-sizing:border-box;border:2px solid #80848b;border-right:1px solid #eef0f2;border-bottom:1px solid #f4f5f7;"></div>
<div style="left:1436px;top:1052px;width:105px;height:25px;box-sizing:border-box;border:2px solid #80848b;border-right:1px solid #eef0f2;border-bottom:1px solid #f4f5f7;"></div>
<div class="t" style="left:1441.00px;top:1054.45px;font-size:13.12px;line-height:20px;letter-spacing:0.618px;color:#111;">00400ad0</div>
<div style="left:1544px;top:1052px;width:137px;height:25px;box-sizing:border-box;border:2px solid #80848b;border-right:1px solid #eef0f2;border-bottom:1px solid #f4f5f7;"></div>
<div class="t" style="left:1549.00px;top:1054.45px;font-size:13.12px;line-height:20px;letter-spacing:0.699px;color:#111;">main</div>
<div style="left:1684px;top:1052px;width:207px;height:25px;box-sizing:border-box;border:2px solid #80848b;border-right:1px solid #eef0f2;border-bottom:1px solid #f4f5f7;"></div>
<div class="t" style="left:1689.00px;top:1054.45px;font-size:13.12px;line-height:20px;letter-spacing:-0.407px;color:#111;">PUSH RBX</div>
<div style="left:1894px;top:1052px;width:22px;height:25px;box-sizing:border-box;border:2px solid #80848b;border-right:1px solid #eef0f2;border-bottom:1px solid #f4f5f7;"></div></body></html>
